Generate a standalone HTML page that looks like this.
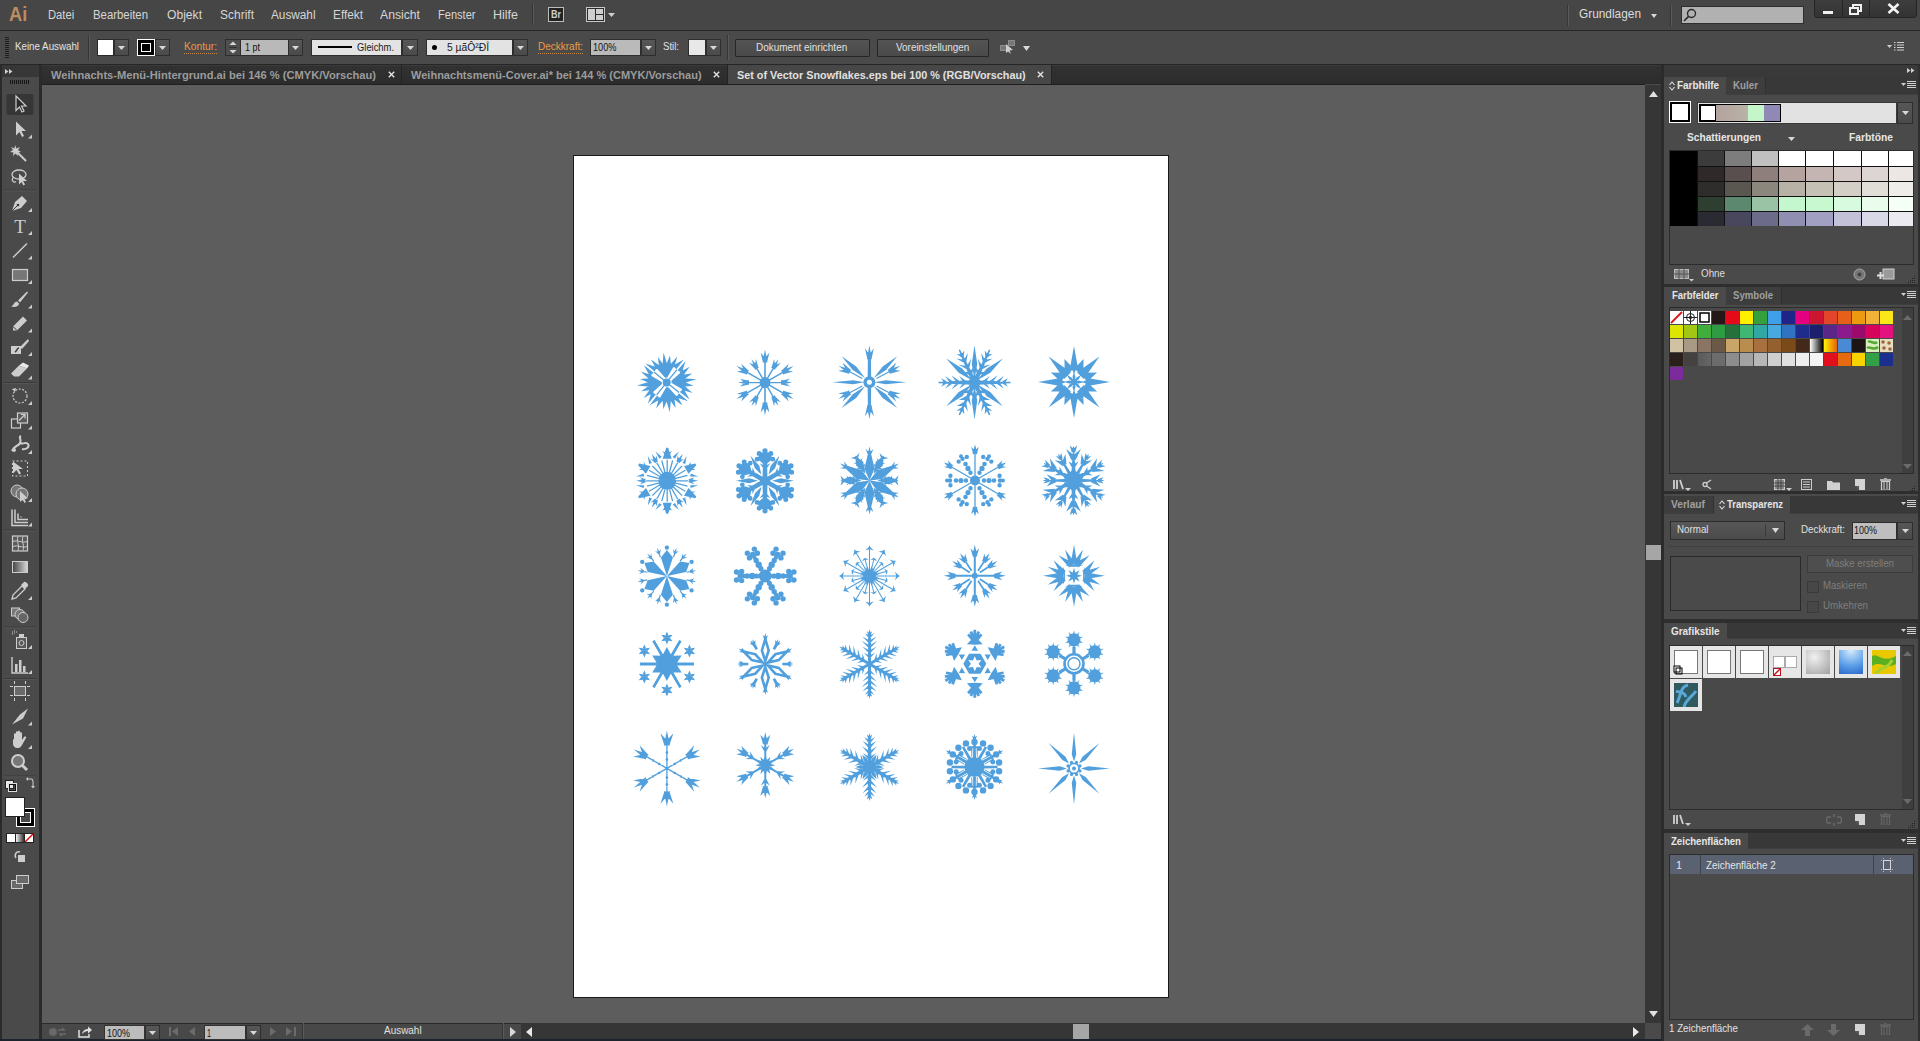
<!DOCTYPE html>
<html><head><meta charset="utf-8">
<style>
*{margin:0;padding:0;box-sizing:border-box}
html,body{width:1920px;height:1041px;overflow:hidden;background:#4a4a4a;font-family:"Liberation Sans",sans-serif;position:relative}
.a{position:absolute}
.t{position:absolute;white-space:pre;transform-origin:0 0}
</style></head><body>
<div class="a" style="left:0px;top:0px;width:1920px;height:30px;background:#464646;"></div>
<div class="a" style="left:0px;top:30px;width:1920px;height:1px;background:#272727;"></div>
<div class="t" style="left:8.5px;top:3.22px;font-size:21px;line-height:21px;font-weight:700;color:#bd8c63;transform:scaleX(0.8667);">Ai</div>
<div class="t" style="left:47.5px;top:8.84px;font-size:12px;line-height:12px;font-weight:400;color:#d6d6d6;transform:scaleX(0.9352);">Datei</div>
<div class="t" style="left:92.5px;top:8.84px;font-size:12px;line-height:12px;font-weight:400;color:#d6d6d6;transform:scaleX(0.9475);">Bearbeiten</div>
<div class="t" style="left:167.0px;top:8.84px;font-size:12px;line-height:12px;font-weight:400;color:#d6d6d6;transform:scaleX(1.0090);">Objekt</div>
<div class="t" style="left:220.0px;top:8.84px;font-size:12px;line-height:12px;font-weight:400;color:#d6d6d6;transform:scaleX(0.9995);">Schrift</div>
<div class="t" style="left:271.0px;top:8.84px;font-size:12px;line-height:12px;font-weight:400;color:#d6d6d6;transform:scaleX(0.9811);">Auswahl</div>
<div class="t" style="left:333.0px;top:8.84px;font-size:12px;line-height:12px;font-weight:400;color:#d6d6d6;transform:scaleX(0.9846);">Effekt</div>
<div class="t" style="left:380.0px;top:8.84px;font-size:12px;line-height:12px;font-weight:400;color:#d6d6d6;transform:scaleX(1.0163);">Ansicht</div>
<div class="t" style="left:437.5px;top:8.84px;font-size:12px;line-height:12px;font-weight:400;color:#d6d6d6;transform:scaleX(0.9217);">Fenster</div>
<div class="t" style="left:493.0px;top:8.84px;font-size:12px;line-height:12px;font-weight:400;color:#d6d6d6;transform:scaleX(1.0410);">Hilfe</div>
<div class="a" style="left:532px;top:4px;width:1px;height:21px;background:#363636;"></div>
<div class="a" style="left:533px;top:4px;width:1px;height:21px;background:#5a5a5a;"></div>
<div class="a" style="left:548px;top:7px;width:16px;height:15px;background:#232323;border:1px solid #bdbdbd;"></div>
<div class="t" style="left:551.0px;top:10.04px;font-size:10px;line-height:10px;font-weight:700;color:#d0d0d0;transform:scaleX(0.8989);">Br</div>
<svg class="a" style="left:586px;top:7px;" width="30" height="15" viewBox="0 0 30 15"><rect x="0.5" y="0.5" width="18" height="14" fill="#2a2a2a" stroke="#c8c8c8"/><rect x="2" y="2" width="7" height="11" fill="#cfcfcf"/><rect x="10" y="2" width="7" height="5" fill="#cfcfcf"/><rect x="10" y="8" width="7" height="5" fill="#cfcfcf"/><path d="M22 6H29L25.5 10Z" fill="#d0d0d0"/></svg>
<div class="a" style="left:1567px;top:5px;width:1px;height:21px;background:#363636;"></div>
<div class="a" style="left:1568px;top:5px;width:1px;height:21px;background:#5a5a5a;"></div>
<div class="t" style="left:1579.0px;top:7.84px;font-size:12px;line-height:12px;font-weight:400;color:#dcdcdc;transform:scaleX(0.9885);">Grundlagen</div>
<svg class="a" style="left:1650.5px;top:13.5px;" width="6" height="4" viewBox="0 0 6 4"><path d="M0 0H6L3.0 4Z" fill="#d8d8d8"/></svg>
<div class="a" style="left:1670px;top:5px;width:1px;height:21px;background:#363636;"></div>
<div class="a" style="left:1671px;top:5px;width:1px;height:21px;background:#5a5a5a;"></div>
<div class="a" style="left:1681px;top:6px;width:123px;height:18px;background:#b1b1b1;border:1px solid #2f2f2f;"></div>
<svg class="a" style="left:1683px;top:8px;" width="14" height="14" viewBox="0 0 14 14"><circle cx="8.5" cy="5.5" r="4" fill="none" stroke="#2a2a2a" stroke-width="1.4"/><path d="M5.6 8.4L1 13" stroke="#2a2a2a" stroke-width="1.6"/></svg>
<div class="a" style="left:1814px;top:-1px;width:103px;height:19px;background:linear-gradient(#3d3d3d,#333);border:1px solid #252525;border-radius:0 0 3px 3px;"></div>
<div class="a" style="left:1842px;top:0px;width:1px;height:18px;background:#262626;"></div>
<div class="a" style="left:1869px;top:0px;width:1px;height:18px;background:#262626;"></div>
<div class="a" style="left:1823px;top:11px;width:10px;height:3px;background:#f0f0f0;"></div>
<svg class="a" style="left:1849px;top:4px;" width="13" height="11" viewBox="0 0 13 11"><rect x="4" y="1" width="8" height="6" fill="none" stroke="#f0f0f0" stroke-width="2"/><rect x="1" y="4" width="8" height="6" fill="#383838" stroke="#f0f0f0" stroke-width="2"/></svg>
<svg class="a" style="left:1887px;top:3px;" width="13" height="11" viewBox="0 0 13 11"><path d="M1.5 1L11.5 10M11.5 1L1.5 10" stroke="#f4f4f4" stroke-width="2.6"/></svg>
<div class="a" style="left:0px;top:31px;width:1920px;height:33px;background:#4a4a4a;"></div>
<div class="a" style="left:0px;top:64px;width:1920px;height:1px;background:#262626;"></div>
<svg class="a" style="left:5px;top:37px;" width="4" height="21" viewBox="0 0 4 21"><rect x="0" y="0" width="4" height="1" fill="#1e1e1e"/><rect x="0" y="2" width="4" height="1" fill="#1e1e1e"/><rect x="0" y="4" width="4" height="1" fill="#1e1e1e"/><rect x="0" y="6" width="4" height="1" fill="#1e1e1e"/><rect x="0" y="8" width="4" height="1" fill="#1e1e1e"/><rect x="0" y="10" width="4" height="1" fill="#1e1e1e"/><rect x="0" y="12" width="4" height="1" fill="#1e1e1e"/><rect x="0" y="14" width="4" height="1" fill="#1e1e1e"/><rect x="0" y="16" width="4" height="1" fill="#1e1e1e"/><rect x="0" y="18" width="4" height="1" fill="#1e1e1e"/><rect x="0" y="20" width="4" height="1" fill="#1e1e1e"/></svg>
<div class="t" style="left:15.0px;top:40.69px;font-size:11px;line-height:11px;font-weight:400;color:#e2e2e2;transform:scaleX(0.8868);">Keine Auswahl</div>
<div class="a" style="left:88px;top:35px;width:1px;height:25px;background:#363636;"></div>
<div class="a" style="left:89px;top:35px;width:1px;height:25px;background:#5a5a5a;"></div>
<div class="a" style="left:97px;top:39px;width:17px;height:17px;background:#ffffff;border:1px solid #2a2a2a;"></div>
<div class="a" style="left:114px;top:39px;width:15px;height:17px;background:linear-gradient(#575757,#4a4a4a);border:1px solid #2e2e2e;"></div>
<svg class="a" style="left:118.0px;top:45.5px;" width="7" height="4" viewBox="0 0 7 4"><path d="M0 0H7L3.5 4Z" fill="#d8d8d8"/></svg>
<div class="a" style="left:137px;top:39px;width:18px;height:17px;background:#000;border:1px solid #fff;"></div>
<div class="a" style="left:141px;top:43px;width:10px;height:9px;background:transparent;border:1.5px solid #fff;"></div>
<div class="a" style="left:155px;top:39px;width:15px;height:17px;background:linear-gradient(#575757,#4a4a4a);border:1px solid #2e2e2e;"></div>
<svg class="a" style="left:159.0px;top:45.5px;" width="7" height="4" viewBox="0 0 7 4"><path d="M0 0H7L3.5 4Z" fill="#d8d8d8"/></svg>
<div class="t" style="left:184.0px;top:40.69px;font-size:11px;line-height:11px;font-weight:400;color:#e89a48;transform:scaleX(0.9304);">Kontur:</div>
<div class="a" style="left:184px;top:53px;width:33px;height:1px;background:repeating-linear-gradient(90deg,#c9863e 0 1px,transparent 1px 2px);"></div>
<div class="a" style="left:225px;top:39px;width:16px;height:17px;background:#4e4e4e;border:1px solid #2e2e2e;"></div>
<svg class="a" style="left:229px;top:40px;" width="8" height="15" viewBox="0 0 8 15"><path d="M0.5 5L4 1.5L7.5 5Z" fill="#d8d8d8"/><path d="M0.5 10L4 13.5L7.5 10Z" fill="#d8d8d8"/><path d="M0 7.5H8" stroke="#333"/></svg>
<div class="a" style="left:241px;top:39px;width:48px;height:17px;background:#b9b9b9;border-top:1px solid #2e2e2e;border-bottom:1px solid #2e2e2e;"></div>
<div class="t" style="left:245.0px;top:41.69px;font-size:11px;line-height:11px;font-weight:400;color:#151515;transform:scaleX(0.8170);">1 pt</div>
<div class="a" style="left:288px;top:39px;width:15px;height:17px;background:linear-gradient(#575757,#4a4a4a);border:1px solid #2e2e2e;"></div>
<svg class="a" style="left:292.0px;top:45.5px;" width="7" height="4" viewBox="0 0 7 4"><path d="M0 0H7L3.5 4Z" fill="#d8d8d8"/></svg>
<div class="a" style="left:311px;top:39px;width:91px;height:17px;background:#e3e3e3;border:1px solid #2e2e2e;"></div>
<div class="a" style="left:318px;top:46px;width:34px;height:2px;background:#000;"></div>
<div class="t" style="left:357.0px;top:41.69px;font-size:11px;line-height:11px;font-weight:400;color:#1a1a1a;transform:scaleX(0.8524);">Gleichm.</div>
<div class="a" style="left:402px;top:39px;width:16px;height:17px;background:linear-gradient(#575757,#4a4a4a);border:1px solid #2e2e2e;"></div>
<svg class="a" style="left:406.5px;top:45.5px;" width="7" height="4" viewBox="0 0 7 4"><path d="M0 0H7L3.5 4Z" fill="#d8d8d8"/></svg>
<div class="a" style="left:426px;top:39px;width:87px;height:17px;background:#e3e3e3;border:1px solid #2e2e2e;"></div>
<div class="a" style="left:432px;top:45px;width:5px;height:5px;background:#000;border-radius:50%;"></div>
<div class="t" style="left:447.0px;top:41.69px;font-size:11px;line-height:11px;font-weight:400;color:#1a1a1a;transform:scaleX(0.9363);">5 µãÔ²ÐÎ</div>
<div class="a" style="left:513px;top:39px;width:15px;height:17px;background:linear-gradient(#575757,#4a4a4a);border:1px solid #2e2e2e;"></div>
<svg class="a" style="left:517.0px;top:45.5px;" width="7" height="4" viewBox="0 0 7 4"><path d="M0 0H7L3.5 4Z" fill="#d8d8d8"/></svg>
<div class="t" style="left:537.5px;top:40.69px;font-size:11px;line-height:11px;font-weight:400;color:#e89a48;transform:scaleX(0.9088);">Deckkraft:</div>
<div class="a" style="left:538px;top:53px;width:45px;height:1px;background:repeating-linear-gradient(90deg,#c9863e 0 1px,transparent 1px 2px);"></div>
<div class="a" style="left:590px;top:39px;width:51px;height:17px;background:#bababa;border:1px solid #2e2e2e;"></div>
<div class="t" style="left:592.5px;top:41.69px;font-size:11px;line-height:11px;font-weight:400;color:#151515;transform:scaleX(0.8351);">100%</div>
<div class="a" style="left:641px;top:39px;width:15px;height:17px;background:linear-gradient(#575757,#4a4a4a);border:1px solid #2e2e2e;"></div>
<svg class="a" style="left:645.0px;top:45.5px;" width="7" height="4" viewBox="0 0 7 4"><path d="M0 0H7L3.5 4Z" fill="#d8d8d8"/></svg>
<div class="t" style="left:663.0px;top:40.69px;font-size:11px;line-height:11px;font-weight:400;color:#e2e2e2;transform:scaleX(0.8722);">Stil:</div>
<div class="a" style="left:688px;top:39px;width:18px;height:17px;background:#e8e8e8;border:1px solid #2e2e2e;"></div>
<div class="a" style="left:706px;top:39px;width:15px;height:17px;background:linear-gradient(#575757,#4a4a4a);border:1px solid #2e2e2e;"></div>
<svg class="a" style="left:710.0px;top:45.5px;" width="7" height="4" viewBox="0 0 7 4"><path d="M0 0H7L3.5 4Z" fill="#d8d8d8"/></svg>
<div class="a" style="left:727px;top:35px;width:1px;height:25px;background:#363636;"></div>
<div class="a" style="left:728px;top:35px;width:1px;height:25px;background:#5a5a5a;"></div>
<div class="a" style="left:735px;top:39px;width:135px;height:18px;background:linear-gradient(#545454,#4a4a4a);border:1px solid #262626;border-radius:1px;"></div>
<div class="t" style="left:756.3px;top:41.69px;font-size:11px;line-height:11px;font-weight:400;color:#e0e0e0;transform:scaleX(0.9039);">Dokument einrichten</div>
<div class="a" style="left:877px;top:39px;width:112px;height:18px;background:linear-gradient(#545454,#4a4a4a);border:1px solid #262626;border-radius:1px;"></div>
<div class="t" style="left:895.8px;top:41.69px;font-size:11px;line-height:11px;font-weight:400;color:#e0e0e0;transform:scaleX(0.9023);">Voreinstellungen</div>
<svg class="a" style="left:999px;top:39px;" width="18" height="17" viewBox="0 0 18 17"><rect x="1.5" y="6.5" width="6" height="5" fill="#777" stroke="#bbb" stroke-dasharray="1 1"/><rect x="9.5" y="1.5" width="6" height="5" fill="#777" stroke="#bbb" stroke-dasharray="1 1"/><path d="M7 5L14 11L10.5 11.5L12 15L9 12.5L7 14Z" fill="#cfcfcf"/></svg>
<svg class="a" style="left:1022.5px;top:45.5px;" width="7" height="5" viewBox="0 0 7 5"><path d="M0 0H7L3.5 5Z" fill="#d8d8d8"/></svg>
<svg class="a" style="left:1887px;top:42px;" width="18" height="10" viewBox="0 0 18 10"><path d="M0 3H5L2.5 6Z" fill="#cfcfcf"/><path d="M7 0.5H8.5M7 3H8.5M7 5.5H8.5M7 8H8.5M10 0.5H17M10 3H17M10 5.5H17M10 8H17" stroke="#cfcfcf"/></svg>
<div class="a" style="left:0px;top:65px;width:42px;height:976px;background:#2b2b2b;"></div>
<div class="a" style="left:2px;top:65px;width:37px;height:12px;background:#373737;"></div>
<svg class="a" style="left:5px;top:69px;" width="8" height="5" viewBox="0 0 8 5"><path d="M0 0L3.5 2.5L0 5ZM4 0L7.5 2.5L4 5Z" fill="#cfcfcf"/></svg>
<div class="a" style="left:2px;top:77px;width:37px;height:964px;background:#4a4a4a;"></div>
<svg class="a" style="left:10px;top:80px;" width="20" height="4" viewBox="0 0 20 4"><rect x="0" y="0" width="1" height="4" fill="#161616"/><rect x="2" y="0" width="1" height="4" fill="#161616"/><rect x="4" y="0" width="1" height="4" fill="#161616"/><rect x="6" y="0" width="1" height="4" fill="#161616"/><rect x="8" y="0" width="1" height="4" fill="#161616"/><rect x="10" y="0" width="1" height="4" fill="#161616"/><rect x="12" y="0" width="1" height="4" fill="#161616"/><rect x="14" y="0" width="1" height="4" fill="#161616"/><rect x="16" y="0" width="1" height="4" fill="#161616"/><rect x="18" y="0" width="1" height="4" fill="#161616"/></svg>
<div class="a" style="left:42px;top:65px;width:1619px;height:19px;background:linear-gradient(#323232,#2c2c2c);"></div>
<div class="a" style="left:42px;top:65px;width:1619px;height:1px;background:#3a3a3a;"></div>
<div class="a" style="left:42px;top:84px;width:1603px;height:1px;background:#1f1f1f;"></div>
<div class="t" style="left:51.0px;top:69.69px;font-size:11px;line-height:11px;font-weight:700;color:#9c9c9c;transform:scaleX(1.0122);">Weihnachts-Menü-Hintergrund.ai bei 146 % (CMYK/Vorschau)</div>
<svg class="a" style="left:387.5px;top:71px;" width="7" height="7" viewBox="0 0 7 7"><path d="M0.8 0.8L6.2 6.2M6.2 0.8L0.8 6.2" stroke="#e8e8e8" stroke-width="1.3"/></svg>
<div class="a" style="left:401px;top:65px;width:1px;height:19px;background:#232323;"></div>
<div class="t" style="left:411.0px;top:69.69px;font-size:11px;line-height:11px;font-weight:700;color:#9c9c9c;transform:scaleX(1.0022);">Weihnachtsmenü-Cover.ai* bei 144 % (CMYK/Vorschau)</div>
<svg class="a" style="left:713.0px;top:71px;" width="7" height="7" viewBox="0 0 7 7"><path d="M0.8 0.8L6.2 6.2M6.2 0.8L0.8 6.2" stroke="#e8e8e8" stroke-width="1.3"/></svg>
<div class="a" style="left:727px;top:65px;width:1px;height:19px;background:#232323;"></div>
<div class="a" style="left:728px;top:65px;width:323px;height:19px;background:#474747;"></div>
<div class="t" style="left:737.0px;top:69.69px;font-size:11px;line-height:11px;font-weight:700;color:#e0e0e0;transform:scaleX(0.9846);">Set of Vector Snowflakes.eps bei 100 % (RGB/Vorschau)</div>
<svg class="a" style="left:1037.0px;top:71px;" width="7" height="7" viewBox="0 0 7 7"><path d="M0.8 0.8L6.2 6.2M6.2 0.8L0.8 6.2" stroke="#e8e8e8" stroke-width="1.3"/></svg>
<div class="a" style="left:1051px;top:65px;width:1px;height:19px;background:#232323;"></div>
<div class="a" style="left:42px;top:85px;width:1603px;height:938px;background:#5d5d5d;"></div>
<div class="a" style="left:573px;top:155px;width:596px;height:843px;background:#ffffff;border:1px solid #1a1a1a;"></div>
<svg class="a" style="left:0;top:0" width="1920" height="1041" viewBox="0 0 1920 1041"><g fill="#51a0dd"><path transform="translate(666.7 382.4)" d="M-1.55 -4.76L0.52 -4.97L7.73 -17.36L4.6 -18.44L1.33 -18.95L-1.99 -18.9L-5.24 -18.26L-8.33 -17.08L-11.17 -15.37ZM-9.72 -15.21L-21.42 -18.84L-12.14 -10.84ZM-6.61 -16.36L-15.72 -23.02L-10.39 -13.08ZM-2.92 -17.06L-8.84 -25.5L-7.59 -15.27ZM0.71 -17.17L-3.14 -29.84L-4.26 -16.65ZM4.25 -16.52L3.34 -26.78L-0.69 -17.3ZM7.44 -14.96L10.59 -25.79L3.07 -17.38ZM9.62 -13.12L17.04 -22.88L6.34 -16.9ZM4.76 -1.55L4.97 0.52L17.36 7.73L18.44 4.6L18.95 1.33L18.9 -1.99L18.26 -5.24L17.08 -8.33L15.37 -11.17ZM15.21 -9.72L18.84 -21.42L10.84 -12.14ZM16.36 -6.61L23.02 -15.72L13.08 -10.39ZM17.06 -2.92L25.5 -8.84L15.27 -7.59ZM17.17 0.71L29.84 -3.14L16.65 -4.26ZM16.52 4.25L26.78 3.34L17.3 -0.69ZM14.96 7.44L25.79 10.59L17.38 3.07ZM13.12 9.62L22.88 17.04L16.9 6.34ZM1.55 4.76L-0.52 4.97L-7.73 17.36L-4.6 18.44L-1.33 18.95L1.99 18.9L5.24 18.26L8.33 17.08L11.17 15.37ZM9.72 15.21L21.42 18.84L12.14 10.84ZM6.61 16.36L15.72 23.02L10.39 13.08ZM2.92 17.06L8.84 25.5L7.59 15.27ZM-0.71 17.17L3.14 29.84L4.26 16.65ZM-4.25 16.52L-3.34 26.78L0.69 17.3ZM-7.44 14.96L-10.59 25.79L-3.07 17.38ZM-9.62 13.12L-17.04 22.88L-6.34 16.9ZM-4.76 1.55L-4.97 -0.52L-17.36 -7.73L-18.44 -4.6L-18.95 -1.33L-18.9 1.99L-18.26 5.24L-17.08 8.33L-15.37 11.17ZM-15.21 9.72L-18.84 21.42L-10.84 12.14ZM-16.36 6.61L-23.02 15.72L-13.08 10.39ZM-17.06 2.92L-25.5 8.84L-15.27 7.59ZM-17.17 -0.71L-29.84 3.14L-16.65 4.26ZM-16.52 -4.25L-26.78 -3.34L-17.3 0.69ZM-14.96 -7.44L-25.79 -10.59L-17.38 -3.07ZM-13.12 -9.62L-22.88 -17.04L-16.9 -6.34ZM-0.51 -0.41L0.51 0.41L10.57 -12.03L9.56 -12.84ZM0.41 -0.51L-0.41 0.51L12.03 10.57L12.84 9.56ZM0.51 0.41L-0.51 -0.41L-10.57 12.03L-9.56 12.84ZM-0.41 0.51L0.41 -0.51L-12.03 -10.57L-12.84 -9.56ZM-4 0a4 4 0 1 0 8 0a4 4 0 1 0 -8 0Z"/><path transform="translate(765 382.6)" d="M-0.8 -4L0.8 -4L0.8 -24L-0.8 -24ZM2.5 -20L0 -33L-2.5 -20ZM2.02 -21.99L-4.38 -29.99L-2.02 -20.01ZM2.02 -20.01L4.38 -29.99L-2.02 -21.99ZM3.06 -2.69L3.86 -1.31L21.18 -11.31L20.38 -12.69ZM18.57 -7.83L28.58 -16.5L16.07 -12.17ZM20.05 -9.24L23.78 -18.79L16.32 -11.76ZM18.34 -8.26L28.16 -11.2L18.03 -12.74ZM3.86 1.31L3.06 2.69L20.38 12.69L21.18 11.31ZM16.07 12.17L28.58 16.5L18.57 7.83ZM18.03 12.74L28.16 11.2L18.34 8.26ZM16.32 11.76L23.78 18.79L20.05 9.24ZM0.8 4L-0.8 4L-0.8 24L0.8 24ZM-2.5 20L0 33L2.5 20ZM-2.02 21.99L4.38 29.99L2.02 20.01ZM-2.02 20.01L-4.38 29.99L2.02 21.99ZM-3.06 2.69L-3.86 1.31L-21.18 11.31L-20.38 12.69ZM-18.57 7.83L-28.58 16.5L-16.07 12.17ZM-20.05 9.24L-23.78 18.79L-16.32 11.76ZM-18.34 8.26L-28.16 11.2L-18.03 12.74ZM-3.86 -1.31L-3.06 -2.69L-20.38 -12.69L-21.18 -11.31ZM-16.07 -12.17L-28.58 -16.5L-18.57 -7.83ZM-18.03 -12.74L-28.16 -11.2L-18.34 -8.26ZM-16.32 -11.76L-23.78 -18.79L-20.05 -9.24ZM1.39 -3.81L2.61 -3.11L9.11 -14.37L7.89 -15.07ZM9.95 -12.73L13.5 -23.38L6.05 -14.98ZM10.5 -14.58L9.13 -23.7L6.5 -14.86ZM9.62 -13.06L15.96 -19.76L7.38 -16.38ZM4 -0.7L4 0.7L17 0.7L17 -0.7ZM16 2.25L27 -0L16 -2.25ZM17.88 1.8L25.09 -3.95L16.12 -1.8ZM16.12 1.8L25.09 3.95L17.88 -1.8ZM2.61 3.11L1.39 3.81L7.89 15.07L9.11 14.37ZM6.05 14.98L13.5 23.38L9.95 12.73ZM7.38 16.38L15.96 19.76L9.62 13.06ZM6.5 14.86L9.13 23.7L10.5 14.58ZM-1.39 3.81L-2.61 3.11L-9.11 14.37L-7.89 15.07ZM-9.95 12.73L-13.5 23.38L-6.05 14.98ZM-10.5 14.58L-9.13 23.7L-6.5 14.86ZM-9.62 13.06L-15.96 19.76L-7.38 16.38ZM-4 0.7L-4 -0.7L-17 -0.7L-17 0.7ZM-16 -2.25L-27 0L-16 2.25ZM-17.88 -1.8L-25.09 3.95L-16.12 1.8ZM-16.12 -1.8L-25.09 -3.95L-17.88 1.8ZM-2.61 -3.11L-1.39 -3.81L-7.89 -15.07L-9.11 -14.37ZM-6.05 -14.98L-13.5 -23.38L-9.95 -12.73ZM-7.38 -16.38L-15.96 -19.76L-9.62 -13.06ZM-6.5 -14.86L-9.13 -23.7L-10.5 -14.58ZM-5.5 0a5.5 5.5 0 1 0 11 0a5.5 5.5 0 1 0 -11 0Z"/><path transform="translate(869.4 382.2)" d="M-1.75 -5L1.75 -5L1.5 -26L-1.5 -26ZM2.5 -23L0 -37L-2.5 -23ZM2.06 -24.92L-4.47 -34.05L-2.06 -23.08ZM2.06 -23.08L4.47 -34.05L-2.06 -24.92ZM1.75 5L-1.75 5L-1.5 26L1.5 26ZM-2.5 23L0 37L2.5 23ZM-2.06 24.92L4.47 34.05L2.06 23.08ZM-2.06 23.08L-4.47 34.05L2.06 24.92ZM5 -0L16.2 2L37 -0L16.2 -2ZM-5 0L-16.2 -2L-37 0L-16.2 2ZM4.39 -4.09L16.62 -12.08L27.79 -25.92L13.21 -15.74ZM4.39 4.09L13.21 15.74L27.79 25.92L16.62 12.08ZM-4.39 4.09L-16.62 12.08L-27.79 25.92L-13.21 15.74ZM-4.39 -4.09L-13.21 -15.74L-27.79 -25.92L-16.62 -12.08ZM6.78 -4.29L7.35 -3.23L21.47 -10.74L20.91 -11.8ZM20.6 -8.12L30.9 -16.43L18.25 -12.54ZM22.1 -9.44L26.93 -19.58L18.51 -12.15ZM20.43 -8.55L31.29 -11.37L20.19 -13.04ZM7.35 3.23L6.78 4.29L20.91 11.8L21.47 10.74ZM18.25 12.54L30.9 16.43L20.6 8.12ZM20.19 13.04L31.29 11.37L20.43 8.55ZM18.51 12.15L26.93 19.58L22.1 9.44ZM-6.78 4.29L-7.35 3.23L-21.47 10.74L-20.91 11.8ZM-20.6 8.12L-30.9 16.43L-18.25 12.54ZM-22.1 9.44L-26.93 19.58L-18.51 12.15ZM-20.43 8.55L-31.29 11.37L-20.19 13.04ZM-7.35 -3.23L-6.78 -4.29L-20.91 -11.8L-21.47 -10.74ZM-18.25 -12.54L-30.9 -16.43L-20.6 -8.12ZM-20.19 -13.04L-31.29 -11.37L-20.43 -8.55ZM-18.51 -12.15L-26.93 -19.58L-22.1 -9.44ZM-6 0a6 6 0 1 0 12 0a6 6 0 1 0 -12 0Z"/><circle cx="869.4" cy="382.2" r="2.5" fill="#fff"/><path transform="translate(974.5 382.4)" d="M-0.77 -3.67L3.31 -1.77L15.89 -32.31L14.53 -32.94ZM5.31 -8.7L0.73 -16.61L2.3 -7.61ZM4.35 -6.65L12.26 -11.23L3.26 -9.66ZM8.27 -15.05L3.34 -23.9L5.26 -13.95ZM7.31 -13L16.16 -17.92L6.21 -16ZM11.22 -21.39L6.64 -29.3L8.22 -20.3ZM10.27 -19.34L18.18 -23.92L9.17 -22.35ZM13.76 -26.83L10.2 -31.92L10.75 -25.74ZM12.8 -24.78L17.89 -28.34L11.71 -27.79ZM3 -2.25L3 2.25L36 0.75L36 -0.75ZM10.13 1.13L15.36 -6.36L7.87 -1.13ZM7.87 1.13L15.36 6.36L10.13 -1.13ZM17.13 1.13L23.07 -7.07L14.87 -1.13ZM14.87 1.13L23.07 7.07L17.13 -1.13ZM24.13 1.13L29.36 -6.36L21.87 -1.13ZM21.87 1.13L29.36 6.36L24.13 -1.13ZM30.13 1.13L33.24 -4.24L27.87 -1.13ZM27.87 1.13L33.24 4.24L30.13 -1.13ZM3.31 1.77L-0.77 3.67L14.53 32.94L15.89 32.31ZM3.26 9.66L12.26 11.23L4.35 6.65ZM2.3 7.61L0.73 16.61L5.31 8.7ZM6.21 16L16.16 17.92L7.31 13ZM5.26 13.95L3.34 23.9L8.27 15.05ZM9.17 22.35L18.18 23.92L10.27 19.34ZM8.22 20.3L6.64 29.3L11.22 21.39ZM11.71 27.79L17.89 28.34L12.8 24.78ZM10.75 25.74L10.2 31.92L13.76 26.83ZM0.77 3.67L-3.31 1.77L-15.89 32.31L-14.53 32.94ZM-5.31 8.7L-0.73 16.61L-2.3 7.61ZM-4.35 6.65L-12.26 11.23L-3.26 9.66ZM-8.27 15.05L-3.34 23.9L-5.26 13.95ZM-7.31 13L-16.16 17.92L-6.21 16ZM-11.22 21.39L-6.64 29.3L-8.22 20.3ZM-10.27 19.34L-18.18 23.92L-9.17 22.35ZM-13.76 26.83L-10.2 31.92L-10.75 25.74ZM-12.8 24.78L-17.89 28.34L-11.71 27.79ZM-3 2.25L-3 -2.25L-36 -0.75L-36 0.75ZM-10.13 -1.13L-15.36 6.36L-7.87 1.13ZM-7.87 -1.13L-15.36 -6.36L-10.13 1.13ZM-17.13 -1.13L-23.07 7.07L-14.87 1.13ZM-14.87 -1.13L-23.07 -7.07L-17.13 1.13ZM-24.13 -1.13L-29.36 6.36L-21.87 1.13ZM-21.87 -1.13L-29.36 -6.36L-24.13 1.13ZM-30.13 -1.13L-33.24 4.24L-27.87 1.13ZM-27.87 -1.13L-33.24 -4.24L-30.13 1.13ZM-3.31 -1.77L0.77 -3.67L-14.53 -32.94L-15.89 -32.31ZM-3.26 -9.66L-12.26 -11.23L-4.35 -6.65ZM-2.3 -7.61L-0.73 -16.61L-5.31 -8.7ZM-6.21 -16L-16.16 -17.92L-7.31 -13ZM-5.26 -13.95L-3.34 -23.9L-8.27 -15.05ZM-9.17 -22.35L-18.18 -23.92L-10.27 -19.34ZM-8.22 -20.3L-6.64 -29.3L-11.22 -21.39ZM-11.71 -27.79L-17.89 -28.34L-12.8 -24.78ZM-10.75 -25.74L-10.2 -31.92L-13.76 -26.83ZM0 -3L2.75 -18.3L0 -37L-2.75 -18.3ZM0 3L-2.75 18.3L0 37L2.75 18.3ZM2.3 -1.93L15.79 -9.66L28.34 -23.78L12.25 -13.87ZM2.3 1.93L12.25 13.87L28.34 23.78L15.79 9.66ZM-2.3 1.93L-15.79 9.66L-28.34 23.78L-12.25 13.87ZM-2.3 -1.93L-12.25 -13.87L-28.34 -23.78L-15.79 -9.66ZM-6 0a6 6 0 1 0 12 0a6 6 0 1 0 -12 0Z"/><path transform="translate(1074 382)" d="M0 -8L3.5 -16.4L0 -36L-3.5 -16.4ZM3.83 -9.24L9.36 -13.44L9.57 -23.1L2.89 -16.12ZM5.66 -5.66L14.07 -9.12L25.46 -25.46L9.12 -14.07ZM9.24 -3.83L16.12 -2.89L23.1 -9.57L13.44 -9.36ZM8 -0L16.4 3.5L36 -0L16.4 -3.5ZM9.24 3.83L13.44 9.36L23.1 9.57L16.12 2.89ZM5.66 5.66L9.12 14.07L25.46 25.46L14.07 9.12ZM3.83 9.24L2.89 16.12L9.57 23.1L9.36 13.44ZM0 8L-3.5 16.4L0 36L3.5 16.4ZM-3.83 9.24L-9.36 13.44L-9.57 23.1L-2.89 16.12ZM-5.66 5.66L-14.07 9.12L-25.46 25.46L-9.12 14.07ZM-9.24 3.83L-16.12 2.89L-23.1 9.57L-13.44 9.36ZM-8 0L-16.4 -3.5L-36 0L-16.4 3.5ZM-9.24 -3.83L-13.44 -9.36L-23.1 -9.57L-16.12 -2.89ZM-5.66 -5.66L-9.12 -14.07L-25.46 -25.46L-14.07 -9.12ZM-3.83 -9.24L-2.89 -16.12L-9.57 -23.1L-9.36 -13.44ZM0 -13L7.78 -7.78L9.5 -16.45L0 -17L-9.5 -16.45L-7.78 -7.78ZM13 -0L7.78 7.78L16.45 9.5L17 -0L16.45 -9.5L7.78 -7.78ZM0 13L-7.78 7.78L-9.5 16.45L0 17L9.5 16.45L7.78 7.78ZM-13 0L-7.78 -7.78L-16.45 -9.5L-17 0L-16.45 9.5L-7.78 7.78Z"/><path transform="translate(1074 382)" d="M0 0L1.5 -5L0 -10L-1.5 -5ZM0 0L4.6 -2.47L7.07 -7.07L2.47 -4.6ZM0 0L5 1.5L10 -0L5 -1.5ZM0 0L2.47 4.6L7.07 7.07L4.6 2.47ZM0 0L-1.5 5L0 10L1.5 5ZM0 0L-4.6 2.47L-7.07 7.07L-2.47 4.6ZM0 0L-5 -1.5L-10 0L-5 1.5ZM0 0L-2.47 -4.6L-7.07 -7.07L-4.6 -2.47ZM-3.5 0a3.5 3.5 0 1 0 7 0a3.5 3.5 0 1 0 -7 0ZM3.18 -9.55L9.55 -3.18L11.67 -5.3L5.3 -11.67ZM9.55 3.18L3.18 9.55L5.3 11.67L11.67 5.3ZM-3.18 9.55L-9.55 3.18L-11.67 5.3L-5.3 11.67ZM-9.55 -3.18L-3.18 -9.55L-5.3 -11.67L-11.67 -5.3Z"/><path transform="translate(667.2 480.8)" d="M-9 0a9 9 0 1 0 18 0a9 9 0 1 0 -18 0ZM-0.65 -7L0.65 -7L0.65 -21L-0.65 -21ZM1.18 -6.93L2.44 -6.59L6.06 -20.12L4.81 -20.45ZM2.94 -6.39L4.06 -5.74L11.06 -17.86L9.94 -18.51ZM4.49 -5.41L5.41 -4.49L15.31 -14.39L14.39 -15.31ZM5.74 -4.06L6.39 -2.94L18.51 -9.94L17.86 -11.06ZM6.59 -2.44L6.93 -1.18L20.45 -4.81L20.12 -6.06ZM7 -0.65L7 0.65L21 0.65L21 -0.65ZM6.93 1.18L6.59 2.44L20.12 6.06L20.45 4.81ZM6.39 2.94L5.74 4.06L17.86 11.06L18.51 9.94ZM5.41 4.49L4.49 5.41L14.39 15.31L15.31 14.39ZM4.06 5.74L2.94 6.39L9.94 18.51L11.06 17.86ZM2.44 6.59L1.18 6.93L4.81 20.45L6.06 20.12ZM0.65 7L-0.65 7L-0.65 21L0.65 21ZM-1.18 6.93L-2.44 6.59L-6.06 20.12L-4.81 20.45ZM-2.94 6.39L-4.06 5.74L-11.06 17.86L-9.94 18.51ZM-4.49 5.41L-5.41 4.49L-15.31 14.39L-14.39 15.31ZM-5.74 4.06L-6.39 2.94L-18.51 9.94L-17.86 11.06ZM-6.59 2.44L-6.93 1.18L-20.45 4.81L-20.12 6.06ZM-7 0.65L-7 -0.65L-21 -0.65L-21 0.65ZM-6.93 -1.18L-6.59 -2.44L-20.12 -6.06L-20.45 -4.81ZM-6.39 -2.94L-5.74 -4.06L-17.86 -11.06L-18.51 -9.94ZM-5.41 -4.49L-4.49 -5.41L-14.39 -15.31L-15.31 -14.39ZM-4.06 -5.74L-2.94 -6.39L-9.94 -18.51L-11.06 -17.86ZM-2.44 -6.59L-1.18 -6.93L-4.81 -20.45L-6.06 -20.12ZM-4.5 -22L4.5 -22L1 -33L-1 -33ZM1.06 -26.06L-4.95 -29.95L-1.06 -23.94ZM1.06 -23.94L4.95 -29.95L-1.06 -26.06ZM12.73 -18.05L15.5 -26.85L9.27 -20.05ZM12.59 -19.19L10.45 -25.33L9.41 -18.91ZM11.68 -17.6L16.71 -21.72L10.32 -20.5ZM7.76 -22.11L11.76 -29.2L5.47 -24.03ZM-5.47 -24.03L-11.76 -29.2L-7.76 -22.11ZM16.8 -14.9L21.3 -7.1L29.08 -15.63L28.08 -17.37ZM23.1 -12.11L23.46 -19.26L20.2 -12.89ZM21.26 -11.05L28.41 -10.69L22.04 -13.95ZM22 2L31 -0L22 -2ZM22.92 1.31L27.16 -3.61L21.08 -1.31ZM21.08 1.31L27.16 3.61L22.92 -1.31ZM23.03 -4.33L31.17 -4.42L23.55 -7.28ZM18.08 -16.75L19.41 -24.78L15.26 -17.78ZM21.3 7.1L16.8 14.9L28.08 17.37L29.08 15.63ZM22.04 13.95L28.41 10.69L21.26 11.05ZM20.2 12.89L23.46 19.26L23.1 12.11ZM9.27 20.05L15.5 26.85L12.73 18.05ZM10.32 20.5L16.71 21.72L11.68 17.6ZM9.41 18.91L10.45 25.33L12.59 19.19ZM15.26 17.78L19.41 24.78L18.08 16.75ZM23.55 7.28L31.17 4.42L23.03 4.33ZM4.5 22L-4.5 22L-1 33L1 33ZM-1.06 26.06L4.95 29.95L1.06 23.94ZM-1.06 23.94L-4.95 29.95L1.06 26.06ZM-12.73 18.05L-15.5 26.85L-9.27 20.05ZM-12.59 19.19L-10.45 25.33L-9.41 18.91ZM-11.68 17.6L-16.71 21.72L-10.32 20.5ZM-7.76 22.11L-11.76 29.2L-5.47 24.03ZM5.47 24.03L11.76 29.2L7.76 22.11ZM-16.8 14.9L-21.3 7.1L-29.08 15.63L-28.08 17.37ZM-23.1 12.11L-23.46 19.26L-20.2 12.89ZM-21.26 11.05L-28.41 10.69L-22.04 13.95ZM-22 -2L-31 0L-22 2ZM-22.92 -1.31L-27.16 3.61L-21.08 1.31ZM-21.08 -1.31L-27.16 -3.61L-22.92 1.31ZM-23.03 4.33L-31.17 4.42L-23.55 7.28ZM-18.08 16.75L-19.41 24.78L-15.26 17.78ZM-21.3 -7.1L-16.8 -14.9L-28.08 -17.37L-29.08 -15.63ZM-22.04 -13.95L-28.41 -10.69L-21.26 -11.05ZM-20.2 -12.89L-23.46 -19.26L-23.1 -12.11ZM-9.27 -20.05L-15.5 -26.85L-12.73 -18.05ZM-10.32 -20.5L-16.71 -21.72L-11.68 -17.6ZM-9.41 -18.91L-10.45 -25.33L-12.59 -19.19ZM-15.26 -17.78L-19.41 -24.78L-18.08 -16.75ZM-23.55 -7.28L-31.17 -4.42L-23.03 -4.33Z"/><path transform="translate(765 480.8)" d="M-2.5 0L2.5 0L2 -22L-2 -22ZM1.78 -16.91L6.43 -21.04L6.53 -26.2L0 -30L-6.53 -26.2L-6.43 -21.04L-1.78 -16.91ZM-2.6 -30a2.6 2.6 0 1 0 5.2 0a2.6 2.6 0 1 0 -5.2 0ZM-8.32 -27.39a2.5 2.5 0 1 0 5 0a2.5 2.5 0 1 0 -5 0ZM3.32 -27.39a2.5 2.5 0 1 0 5 0a2.5 2.5 0 1 0 -5 0ZM-10.27 -21.61a2.4 2.4 0 1 0 4.8 0a2.4 2.4 0 1 0 -4.8 0ZM5.47 -21.61a2.4 2.4 0 1 0 4.8 0a2.4 2.4 0 1 0 -4.8 0ZM1.12 -14.34L-5.36 -17.5L-1.12 -11.66ZM1.12 -11.66L5.36 -17.5L-1.12 -14.34ZM3.5 -6.06L10.07 -12.43L14.5 -25.11L5.73 -14.93ZM-1.25 -2.17L1.25 2.17L20.05 -9.27L18.05 -12.73ZM15.53 -6.91L21.44 -4.95L25.95 -7.44L25.98 -15L19.42 -18.76L15 -16.09L13.75 -9.99ZM23.38 -15a2.6 2.6 0 1 0 5.2 0a2.6 2.6 0 1 0 -5.2 0ZM18.31 -18.74a2.5 2.5 0 1 0 5 0a2.5 2.5 0 1 0 -5 0ZM24.13 -8.65a2.5 2.5 0 1 0 5 0a2.5 2.5 0 1 0 -5 0ZM12.38 -17.62a2.4 2.4 0 1 0 4.8 0a2.4 2.4 0 1 0 -4.8 0ZM20.25 -3.99a2.4 2.4 0 1 0 4.8 0a2.4 2.4 0 1 0 -4.8 0ZM12.98 -6.2L12.47 -13.39L9.53 -6.8ZM10.66 -4.86L17.84 -4.11L11.86 -8.14ZM7 -0L15.8 2.5L29 -0L15.8 -2.5ZM1.25 -2.17L-1.25 2.17L18.05 12.73L20.05 9.27ZM13.75 9.99L15 16.09L19.42 18.76L25.98 15L25.95 7.44L21.44 4.95L15.53 6.91ZM23.38 15a2.6 2.6 0 1 0 5.2 0a2.6 2.6 0 1 0 -5.2 0ZM24.13 8.65a2.5 2.5 0 1 0 5 0a2.5 2.5 0 1 0 -5 0ZM18.31 18.74a2.5 2.5 0 1 0 5 0a2.5 2.5 0 1 0 -5 0ZM20.25 3.99a2.4 2.4 0 1 0 4.8 0a2.4 2.4 0 1 0 -4.8 0ZM12.38 17.62a2.4 2.4 0 1 0 4.8 0a2.4 2.4 0 1 0 -4.8 0ZM11.86 8.14L17.84 4.11L10.66 4.86ZM9.53 6.8L12.47 13.39L12.98 6.2ZM3.5 6.06L5.73 14.93L14.5 25.11L10.07 12.43ZM2.5 -0L-2.5 0L-2 22L2 22ZM-1.78 16.91L-6.43 21.04L-6.53 26.2L0 30L6.53 26.2L6.43 21.04L1.78 16.91ZM-2.6 30a2.6 2.6 0 1 0 5.2 0a2.6 2.6 0 1 0 -5.2 0ZM3.32 27.39a2.5 2.5 0 1 0 5 0a2.5 2.5 0 1 0 -5 0ZM-8.32 27.39a2.5 2.5 0 1 0 5 0a2.5 2.5 0 1 0 -5 0ZM5.47 21.61a2.4 2.4 0 1 0 4.8 0a2.4 2.4 0 1 0 -4.8 0ZM-10.27 21.61a2.4 2.4 0 1 0 4.8 0a2.4 2.4 0 1 0 -4.8 0ZM-1.12 14.34L5.36 17.5L1.12 11.66ZM-1.12 11.66L-5.36 17.5L1.12 14.34ZM-3.5 6.06L-10.07 12.43L-14.5 25.11L-5.73 14.93ZM1.25 2.17L-1.25 -2.17L-20.05 9.27L-18.05 12.73ZM-15.53 6.91L-21.44 4.95L-25.95 7.44L-25.98 15L-19.42 18.76L-15 16.09L-13.75 9.99ZM-28.58 15a2.6 2.6 0 1 0 5.2 0a2.6 2.6 0 1 0 -5.2 0ZM-23.31 18.74a2.5 2.5 0 1 0 5 0a2.5 2.5 0 1 0 -5 0ZM-29.13 8.65a2.5 2.5 0 1 0 5 0a2.5 2.5 0 1 0 -5 0ZM-17.18 17.62a2.4 2.4 0 1 0 4.8 0a2.4 2.4 0 1 0 -4.8 0ZM-25.05 3.99a2.4 2.4 0 1 0 4.8 0a2.4 2.4 0 1 0 -4.8 0ZM-12.98 6.2L-12.47 13.39L-9.53 6.8ZM-10.66 4.86L-17.84 4.11L-11.86 8.14ZM-7 0L-15.8 -2.5L-29 0L-15.8 2.5ZM-1.25 2.17L1.25 -2.17L-18.05 -12.73L-20.05 -9.27ZM-13.75 -9.99L-15 -16.09L-19.42 -18.76L-25.98 -15L-25.95 -7.44L-21.44 -4.95L-15.53 -6.91ZM-28.58 -15a2.6 2.6 0 1 0 5.2 0a2.6 2.6 0 1 0 -5.2 0ZM-29.13 -8.65a2.5 2.5 0 1 0 5 0a2.5 2.5 0 1 0 -5 0ZM-23.31 -18.74a2.5 2.5 0 1 0 5 0a2.5 2.5 0 1 0 -5 0ZM-25.05 -3.99a2.4 2.4 0 1 0 4.8 0a2.4 2.4 0 1 0 -4.8 0ZM-17.18 -17.62a2.4 2.4 0 1 0 4.8 0a2.4 2.4 0 1 0 -4.8 0ZM-11.86 -8.14L-17.84 -4.11L-10.66 -4.86ZM-9.53 -6.8L-12.47 -13.39L-12.98 -6.2ZM-3.5 -6.06L-5.73 -14.93L-14.5 -25.11L-10.07 -12.43ZM-2.5 -4.33L-8.66 -5L-5 0L-8.66 5L-2.5 4.33L0 10L2.5 4.33L8.66 5L5 -0L8.66 -5L2.5 -4.33L0 -10Z"/><path transform="translate(869.5 480.6)" d="M0 0L5 -11.9L0 -34L-5 -11.9ZM4 -6.93L13.24 -14.93L14.5 -25.11L6.31 -18.93ZM8.3 -12.87L4 -17.32L5.7 -11.37ZM7 -10.62L13 -12.12L7 -13.62ZM11.3 -18.07L7 -22.52L8.7 -16.57ZM10 -15.82L16 -17.32L10 -18.82ZM14.3 -23.27L10 -27.71L11.7 -21.77ZM13 -21.02L19 -22.52L13 -24.02ZM1.23 -26.86L-4.02 -31.73L-1.23 -25.14ZM1.23 -25.14L4.02 -31.73L-1.23 -26.86ZM0 0L12.81 -1.62L29.44 -17L7.81 -10.28ZM8 -0L19.55 4L29 -0L19.55 -4ZM15.3 0.75L17 -5.2L12.7 -0.75ZM12.7 0.75L17 5.2L15.3 -0.75ZM21.3 0.75L23 -5.2L18.7 -0.75ZM18.7 0.75L23 5.2L21.3 -0.75ZM27.3 0.75L29 -5.2L24.7 -0.75ZM24.7 0.75L29 5.2L27.3 -0.75ZM23.88 -12.37L25.47 -19.34L21.16 -13.63ZM22.39 -11.51L29.49 -12.39L22.65 -14.49ZM0 0L7.81 10.28L29.44 17L12.81 1.62ZM4 6.93L6.31 18.93L14.5 25.11L13.24 14.93ZM7 13.62L13 12.12L7 10.62ZM5.7 11.37L4 17.32L8.3 12.87ZM10 18.82L16 17.32L10 15.82ZM8.7 16.57L7 22.52L11.3 18.07ZM13 24.02L19 22.52L13 21.02ZM11.7 21.77L10 27.71L14.3 23.27ZM22.65 14.49L29.49 12.39L22.39 11.51ZM21.16 13.63L25.47 19.34L23.88 12.37ZM0 0L-5 11.9L0 34L5 11.9ZM-4 6.93L-13.24 14.93L-14.5 25.11L-6.31 18.93ZM-8.3 12.87L-4 17.32L-5.7 11.37ZM-7 10.62L-13 12.12L-7 13.62ZM-11.3 18.07L-7 22.52L-8.7 16.57ZM-10 15.82L-16 17.32L-10 18.82ZM-14.3 23.27L-10 27.71L-11.7 21.77ZM-13 21.02L-19 22.52L-13 24.02ZM-1.23 26.86L4.02 31.73L1.23 25.14ZM-1.23 25.14L-4.02 31.73L1.23 26.86ZM0 0L-12.81 1.62L-29.44 17L-7.81 10.28ZM-8 0L-19.55 -4L-29 0L-19.55 4ZM-15.3 -0.75L-17 5.2L-12.7 0.75ZM-12.7 -0.75L-17 -5.2L-15.3 0.75ZM-21.3 -0.75L-23 5.2L-18.7 0.75ZM-18.7 -0.75L-23 -5.2L-21.3 0.75ZM-27.3 -0.75L-29 5.2L-24.7 0.75ZM-24.7 -0.75L-29 -5.2L-27.3 0.75ZM-23.88 12.37L-25.47 19.34L-21.16 13.63ZM-22.39 11.51L-29.49 12.39L-22.65 14.49ZM0 0L-7.81 -10.28L-29.44 -17L-12.81 -1.62ZM-4 -6.93L-6.31 -18.93L-14.5 -25.11L-13.24 -14.93ZM-7 -13.62L-13 -12.12L-7 -10.62ZM-5.7 -11.37L-4 -17.32L-8.3 -12.87ZM-10 -18.82L-16 -17.32L-10 -15.82ZM-8.7 -16.57L-7 -22.52L-11.3 -18.07ZM-13 -24.02L-19 -22.52L-13 -21.02ZM-11.7 -21.77L-10 -27.71L-14.3 -23.27ZM-22.65 -14.49L-29.49 -12.39L-22.39 -11.51ZM-21.16 -13.63L-25.47 -19.34L-23.88 -12.37Z"/><path transform="translate(975 480.5)" d="M-5 0a5 5 0 1 0 10 0a5 5 0 1 0 -10 0ZM-0.65 -3L0.65 -3L0.65 -28L-0.65 -28ZM2.5 -27L0 -36L-2.5 -27ZM1.73 -28L-3.82 -33.63L-1.73 -26ZM1.73 -26L3.82 -33.63L-1.73 -28ZM2.3 -7.79a2.2 2.2 0 1 0 4.4 0a2.2 2.2 0 1 0 -4.4 0ZM4.4 -12.12a2.6 2.6 0 1 0 5.2 0a2.6 2.6 0 1 0 -5.2 0ZM7.2 -16.45a2.3 2.3 0 1 0 4.6 0a2.3 2.3 0 1 0 -4.6 0ZM6.02 -23.61a2.2 2.2 0 1 0 4.4 0a2.2 2.2 0 1 0 -4.4 0ZM10.3 -21.65a2.2 2.2 0 1 0 4.4 0a2.2 2.2 0 1 0 -4.4 0ZM14.14 -18.92a2.2 2.2 0 1 0 4.4 0a2.2 2.2 0 1 0 -4.4 0ZM12 -24.25a2 2 0 1 0 4 0a2 2 0 1 0 -4 0ZM2.27 -2.06L2.92 -0.94L24.57 -13.44L23.92 -14.56ZM24.63 -11.33L31.18 -18L22.13 -15.67ZM25.11 -12.5L27.21 -20.13L21.65 -14.5ZM23.38 -11.5L31.03 -13.5L23.38 -15.5ZM6.8 -0a2.2 2.2 0 1 0 4.4 0a2.2 2.2 0 1 0 -4.4 0ZM11.4 -0a2.6 2.6 0 1 0 5.2 0a2.6 2.6 0 1 0 -5.2 0ZM16.7 -0a2.3 2.3 0 1 0 4.6 0a2.3 2.3 0 1 0 -4.6 0ZM22.36 -4.68a2.2 2.2 0 1 0 4.4 0a2.2 2.2 0 1 0 -4.4 0ZM22.8 -0a2.2 2.2 0 1 0 4.4 0a2.2 2.2 0 1 0 -4.4 0ZM22.36 4.68a2.2 2.2 0 1 0 4.4 0a2.2 2.2 0 1 0 -4.4 0ZM26 -0a2 2 0 1 0 4 0a2 2 0 1 0 -4 0ZM2.92 0.94L2.27 2.06L23.92 14.56L24.57 13.44ZM22.13 15.67L31.18 18L24.63 11.33ZM23.38 15.5L31.03 13.5L23.38 11.5ZM21.65 14.5L27.21 20.13L25.11 12.5ZM2.3 7.79a2.2 2.2 0 1 0 4.4 0a2.2 2.2 0 1 0 -4.4 0ZM4.4 12.12a2.6 2.6 0 1 0 5.2 0a2.6 2.6 0 1 0 -5.2 0ZM7.2 16.45a2.3 2.3 0 1 0 4.6 0a2.3 2.3 0 1 0 -4.6 0ZM14.14 18.92a2.2 2.2 0 1 0 4.4 0a2.2 2.2 0 1 0 -4.4 0ZM10.3 21.65a2.2 2.2 0 1 0 4.4 0a2.2 2.2 0 1 0 -4.4 0ZM6.02 23.61a2.2 2.2 0 1 0 4.4 0a2.2 2.2 0 1 0 -4.4 0ZM12 24.25a2 2 0 1 0 4 0a2 2 0 1 0 -4 0ZM0.65 3L-0.65 3L-0.65 28L0.65 28ZM-2.5 27L0 36L2.5 27ZM-1.73 28L3.83 33.63L1.73 26ZM-1.73 26L-3.82 33.63L1.73 28ZM-6.7 7.79a2.2 2.2 0 1 0 4.4 0a2.2 2.2 0 1 0 -4.4 0ZM-9.6 12.12a2.6 2.6 0 1 0 5.2 0a2.6 2.6 0 1 0 -5.2 0ZM-11.8 16.45a2.3 2.3 0 1 0 4.6 0a2.3 2.3 0 1 0 -4.6 0ZM-10.42 23.61a2.2 2.2 0 1 0 4.4 0a2.2 2.2 0 1 0 -4.4 0ZM-14.7 21.65a2.2 2.2 0 1 0 4.4 0a2.2 2.2 0 1 0 -4.4 0ZM-18.54 18.92a2.2 2.2 0 1 0 4.4 0a2.2 2.2 0 1 0 -4.4 0ZM-16 24.25a2 2 0 1 0 4 0a2 2 0 1 0 -4 0ZM-2.27 2.06L-2.92 0.94L-24.57 13.44L-23.92 14.56ZM-24.63 11.33L-31.18 18L-22.13 15.67ZM-25.11 12.5L-27.21 20.13L-21.65 14.5ZM-23.38 11.5L-31.03 13.5L-23.38 15.5ZM-11.2 0a2.2 2.2 0 1 0 4.4 0a2.2 2.2 0 1 0 -4.4 0ZM-16.6 0a2.6 2.6 0 1 0 5.2 0a2.6 2.6 0 1 0 -5.2 0ZM-21.3 0a2.3 2.3 0 1 0 4.6 0a2.3 2.3 0 1 0 -4.6 0ZM-26.76 4.68a2.2 2.2 0 1 0 4.4 0a2.2 2.2 0 1 0 -4.4 0ZM-27.2 0a2.2 2.2 0 1 0 4.4 0a2.2 2.2 0 1 0 -4.4 0ZM-26.76 -4.68a2.2 2.2 0 1 0 4.4 0a2.2 2.2 0 1 0 -4.4 0ZM-30 0a2 2 0 1 0 4 0a2 2 0 1 0 -4 0ZM-2.92 -0.94L-2.27 -2.06L-23.92 -14.56L-24.57 -13.44ZM-22.13 -15.67L-31.18 -18L-24.63 -11.33ZM-23.38 -15.5L-31.03 -13.5L-23.38 -11.5ZM-21.65 -14.5L-27.21 -20.13L-25.11 -12.5ZM-6.7 -7.79a2.2 2.2 0 1 0 4.4 0a2.2 2.2 0 1 0 -4.4 0ZM-9.6 -12.12a2.6 2.6 0 1 0 5.2 0a2.6 2.6 0 1 0 -5.2 0ZM-11.8 -16.45a2.3 2.3 0 1 0 4.6 0a2.3 2.3 0 1 0 -4.6 0ZM-18.54 -18.92a2.2 2.2 0 1 0 4.4 0a2.2 2.2 0 1 0 -4.4 0ZM-14.7 -21.65a2.2 2.2 0 1 0 4.4 0a2.2 2.2 0 1 0 -4.4 0ZM-10.42 -23.61a2.2 2.2 0 1 0 4.4 0a2.2 2.2 0 1 0 -4.4 0ZM-16 -24.25a2 2 0 1 0 4 0a2 2 0 1 0 -4 0Z"/><path transform="translate(1073.5 480.4)" d="M-4 -6.93L-11.26 -6.5L-8 0L-11.26 6.5L-4 6.93L0 13L4 6.93L11.26 6.5L8 -0L11.26 -6.5L4 -6.93L0 -13ZM-2.5 0L2.5 0L0.5 -34L-0.5 -34ZM2.17 -23.69L-7.39 -31.46L-2.17 -20.31ZM2.17 -20.31L7.39 -31.46L-2.17 -23.69ZM1.7 -30.06L-3.71 -34.94L-1.7 -27.94ZM1.7 -27.94L3.71 -34.94L-1.7 -30.06ZM1.41 -15.41L-4.95 -18.95L-1.41 -12.59ZM1.41 -12.59L4.95 -18.95L-1.41 -15.41ZM-1.73 -1L1.73 1L15.43 -25.73L14.57 -26.23ZM11.98 -16.8L8.11 -26.36L7.02 -16.11ZM10.44 -14.14L18.77 -20.2L8.56 -18.77ZM14.25 -21.71L12.29 -27.65L10.75 -21.59ZM13.32 -20.11L17.8 -24.47L11.68 -23.2ZM-1.25 -2.17L1.25 2.17L29.69 -16.57L29.19 -17.43ZM21.6 -9.97L23.55 -22.13L16.5 -12.03ZM18.67 -8.28L30.94 -9.33L19.44 -13.72ZM26.88 -13.56L28.4 -20.68L23.35 -15.44ZM25.04 -12.5L32.11 -14.26L25.18 -16.5ZM14.06 -6.48L13.94 -13.76L10.19 -7.52ZM11.61 -5.07L18.89 -5.19L12.64 -8.93ZM-0 -2L0 2L30 0.5L30 -0.5ZM20.54 1.97L26.88 -6.16L17.46 -1.97ZM17.46 1.97L26.88 6.16L20.54 -1.97ZM25.93 1.48L30.09 -3.18L24.07 -1.48ZM24.07 1.48L30.09 3.18L25.93 -1.48ZM1.25 -2.17L-1.25 2.17L29.19 17.43L29.69 16.57ZM19.44 13.72L30.94 9.33L18.67 8.28ZM16.5 12.03L23.55 22.13L21.6 9.97ZM25.18 16.5L32.11 14.26L25.04 12.5ZM23.35 15.44L28.4 20.68L26.88 13.56ZM12.64 8.93L18.89 5.19L11.61 5.07ZM10.19 7.52L13.94 13.76L14.06 6.48ZM1.73 -1L-1.73 1L14.57 26.23L15.43 25.73ZM8.56 18.77L18.77 20.2L10.44 14.14ZM7.02 16.11L8.11 26.36L11.98 16.8ZM11.68 23.2L17.8 24.47L13.32 20.11ZM10.75 21.59L12.29 27.65L14.25 21.71ZM2.5 -0L-2.5 0L-0.5 34L0.5 34ZM-2.17 23.69L7.39 31.46L2.17 20.31ZM-2.17 20.31L-7.39 31.46L2.17 23.69ZM-1.7 30.06L3.71 34.94L1.7 27.94ZM-1.7 27.94L-3.71 34.94L1.7 30.06ZM-1.41 15.41L4.95 18.95L1.41 12.59ZM-1.41 12.59L-4.95 18.95L1.41 15.41ZM1.73 1L-1.73 -1L-15.43 25.73L-14.57 26.23ZM-11.98 16.8L-8.11 26.36L-7.02 16.11ZM-10.44 14.14L-18.77 20.2L-8.56 18.77ZM-14.25 21.71L-12.29 27.65L-10.75 21.59ZM-13.32 20.11L-17.8 24.47L-11.68 23.2ZM1.25 2.17L-1.25 -2.17L-29.69 16.57L-29.19 17.43ZM-21.6 9.97L-23.55 22.13L-16.5 12.03ZM-18.67 8.28L-30.94 9.33L-19.44 13.72ZM-26.88 13.56L-28.4 20.68L-23.35 15.44ZM-25.04 12.5L-32.11 14.26L-25.18 16.5ZM-14.06 6.48L-13.94 13.76L-10.19 7.52ZM-11.61 5.07L-18.89 5.19L-12.64 8.93ZM0 2L-0 -2L-30 -0.5L-30 0.5ZM-20.54 -1.97L-26.88 6.16L-17.46 1.97ZM-17.46 -1.97L-26.88 -6.16L-20.54 1.97ZM-25.93 -1.48L-30.09 3.18L-24.07 1.48ZM-24.07 -1.48L-30.09 -3.18L-25.93 1.48ZM-1.25 2.17L1.25 -2.17L-29.19 -17.43L-29.69 -16.57ZM-19.44 -13.72L-30.94 -9.33L-18.67 -8.28ZM-16.5 -12.03L-23.55 -22.13L-21.6 -9.97ZM-25.18 -16.5L-32.11 -14.26L-25.04 -12.5ZM-23.35 -15.44L-28.4 -20.68L-26.88 -13.56ZM-12.64 -8.93L-18.89 -5.19L-11.61 -5.07ZM-10.19 -7.52L-13.94 -13.76L-14.06 -6.48ZM-1.73 1L1.73 -1L-14.57 -26.23L-15.43 -25.73ZM-8.56 -18.77L-18.77 -20.2L-10.44 -14.14ZM-7.02 -16.11L-8.11 -26.36L-11.98 -16.8ZM-11.68 -23.2L-17.8 -24.47L-13.32 -20.11ZM-10.75 -21.59L-12.29 -27.65L-14.25 -21.71Z"/><path transform="translate(666.9 576.1)" d="M0 0L6 -18.72L0 -26L-6 -18.72ZM-2.2 -28.5a2.2 2.2 0 1 0 4.4 0a2.2 2.2 0 1 0 -4.4 0ZM-6.58 -23.12L-9.77 -28.37L-9.04 -22.27ZM-7.28 -23.58L-11.93 -25.16L-8.35 -21.8ZM-6.84 -22.32L-6.09 -27.17L-8.78 -23.07ZM-7.08 -18.72L-5.94 -19.11L-7.57 -23.83L-8.71 -23.44ZM9.04 -22.27L9.77 -28.37L6.58 -23.12ZM8.78 -23.07L6.09 -27.17L6.84 -22.32ZM8.35 -21.8L11.93 -25.16L7.28 -23.58ZM5.94 -19.11L7.08 -18.72L8.71 -23.44L7.57 -23.83ZM0 0L19.21 -4.16L22.52 -13L13.21 -14.56ZM22.48 -14.25a2.2 2.2 0 1 0 4.4 0a2.2 2.2 0 1 0 -4.4 0ZM16.73 -17.26L19.68 -22.64L14.76 -18.97ZM16.79 -18.09L15.83 -22.91L14.71 -18.13ZM15.91 -17.09L20.49 -18.86L15.58 -19.14ZM12.67 -15.49L13.57 -14.7L16.85 -18.47L15.95 -19.26ZM23.81 -3.3L29.45 -5.72L23.31 -5.86ZM24.37 -3.92L26.58 -8.31L22.75 -5.23ZM23.05 -3.67L27.76 -2.25L24.06 -5.49ZM19.52 -4.41L19.75 -3.23L24.66 -4.18L24.43 -5.36ZM0 0L13.21 14.56L22.52 13L19.21 4.16ZM22.48 14.25a2.2 2.2 0 1 0 4.4 0a2.2 2.2 0 1 0 -4.4 0ZM23.31 5.86L29.45 5.72L23.81 3.3ZM24.06 5.49L27.76 2.25L23.05 3.67ZM22.75 5.23L26.58 8.31L24.37 3.92ZM19.75 3.23L19.52 4.41L24.43 5.36L24.66 4.18ZM14.76 18.97L19.68 22.64L16.73 17.26ZM15.58 19.14L20.49 18.86L15.91 17.09ZM14.71 18.13L15.83 22.91L16.79 18.09ZM13.57 14.7L12.67 15.49L15.95 19.26L16.85 18.47ZM0 0L-6 18.72L0 26L6 18.72ZM-2.2 28.5a2.2 2.2 0 1 0 4.4 0a2.2 2.2 0 1 0 -4.4 0ZM6.58 23.12L9.77 28.37L9.04 22.27ZM7.28 23.58L11.93 25.16L8.35 21.8ZM6.84 22.32L6.09 27.17L8.78 23.07ZM7.08 18.72L5.94 19.11L7.57 23.83L8.71 23.44ZM-9.04 22.27L-9.77 28.37L-6.58 23.12ZM-8.78 23.07L-6.09 27.17L-6.84 22.32ZM-8.35 21.8L-11.93 25.16L-7.28 23.58ZM-5.94 19.11L-7.08 18.72L-8.71 23.44L-7.57 23.83ZM0 0L-19.21 4.16L-22.52 13L-13.21 14.56ZM-26.88 14.25a2.2 2.2 0 1 0 4.4 0a2.2 2.2 0 1 0 -4.4 0ZM-16.73 17.26L-19.68 22.64L-14.76 18.97ZM-16.79 18.09L-15.83 22.91L-14.71 18.13ZM-15.91 17.09L-20.49 18.86L-15.58 19.14ZM-12.67 15.49L-13.57 14.7L-16.85 18.47L-15.95 19.26ZM-23.81 3.3L-29.45 5.72L-23.31 5.86ZM-24.37 3.92L-26.58 8.31L-22.75 5.23ZM-23.05 3.67L-27.76 2.25L-24.06 5.49ZM-19.52 4.41L-19.75 3.23L-24.66 4.18L-24.43 5.36ZM0 0L-13.21 -14.56L-22.52 -13L-19.21 -4.16ZM-26.88 -14.25a2.2 2.2 0 1 0 4.4 0a2.2 2.2 0 1 0 -4.4 0ZM-23.31 -5.86L-29.45 -5.72L-23.81 -3.3ZM-24.06 -5.49L-27.76 -2.25L-23.05 -3.67ZM-22.75 -5.23L-26.58 -8.31L-24.37 -3.92ZM-19.75 -3.23L-19.52 -4.41L-24.43 -5.36L-24.66 -4.18ZM-14.76 -18.97L-19.68 -22.64L-16.73 -17.26ZM-15.58 -19.14L-20.49 -18.86L-15.91 -17.09ZM-14.71 -18.13L-15.83 -22.91L-16.79 -18.09ZM-13.57 -14.7L-12.67 -15.49L-15.95 -19.26L-16.85 -18.47Z"/><path transform="translate(765.2 576)" d="M-6.5 0a6.5 6.5 0 1 0 13 0a6.5 6.5 0 1 0 -13 0ZM1.65 -7.36a2.6 2.6 0 1 0 5.2 0a2.6 2.6 0 1 0 -5.2 0ZM3.3 -11.26a3.2 3.2 0 1 0 6.4 0a3.2 3.2 0 1 0 -6.4 0ZM6.3 -15.59a2.7 2.7 0 1 0 5.4 0a2.7 2.7 0 1 0 -5.4 0ZM8.55 -18.62a2.2 2.2 0 1 0 4.4 0a2.2 2.2 0 1 0 -4.4 0ZM9.8 -21.65a2.7 2.7 0 1 0 5.4 0a2.7 2.7 0 1 0 -5.4 0ZM5.11 -22.69a2.7 2.7 0 1 0 5.4 0a2.7 2.7 0 1 0 -5.4 0ZM13.05 -18.11a2.7 2.7 0 1 0 5.4 0a2.7 2.7 0 1 0 -5.4 0ZM8.16 -26.89a2.7 2.7 0 1 0 5.4 0a2.7 2.7 0 1 0 -5.4 0ZM15.15 -22.85a2.7 2.7 0 1 0 5.4 0a2.7 2.7 0 1 0 -5.4 0ZM1.22 -3.91L2.78 -3.01L13.28 -21.2L11.72 -22.1ZM5.9 -0a2.6 2.6 0 1 0 5.2 0a2.6 2.6 0 1 0 -5.2 0ZM9.8 -0a3.2 3.2 0 1 0 6.4 0a3.2 3.2 0 1 0 -6.4 0ZM15.3 -0a2.7 2.7 0 1 0 5.4 0a2.7 2.7 0 1 0 -5.4 0ZM19.3 -0a2.2 2.2 0 1 0 4.4 0a2.2 2.2 0 1 0 -4.4 0ZM22.3 -0a2.7 2.7 0 1 0 5.4 0a2.7 2.7 0 1 0 -5.4 0ZM20.86 -4.58a2.7 2.7 0 1 0 5.4 0a2.7 2.7 0 1 0 -5.4 0ZM20.86 4.58a2.7 2.7 0 1 0 5.4 0a2.7 2.7 0 1 0 -5.4 0ZM26.02 -4.04a2.7 2.7 0 1 0 5.4 0a2.7 2.7 0 1 0 -5.4 0ZM26.02 4.04a2.7 2.7 0 1 0 5.4 0a2.7 2.7 0 1 0 -5.4 0ZM4 -0.9L4 0.9L25 0.9L25 -0.9ZM1.65 7.36a2.6 2.6 0 1 0 5.2 0a2.6 2.6 0 1 0 -5.2 0ZM3.3 11.26a3.2 3.2 0 1 0 6.4 0a3.2 3.2 0 1 0 -6.4 0ZM6.3 15.59a2.7 2.7 0 1 0 5.4 0a2.7 2.7 0 1 0 -5.4 0ZM8.55 18.62a2.2 2.2 0 1 0 4.4 0a2.2 2.2 0 1 0 -4.4 0ZM9.8 21.65a2.7 2.7 0 1 0 5.4 0a2.7 2.7 0 1 0 -5.4 0ZM13.05 18.11a2.7 2.7 0 1 0 5.4 0a2.7 2.7 0 1 0 -5.4 0ZM5.11 22.69a2.7 2.7 0 1 0 5.4 0a2.7 2.7 0 1 0 -5.4 0ZM15.15 22.85a2.7 2.7 0 1 0 5.4 0a2.7 2.7 0 1 0 -5.4 0ZM8.16 26.89a2.7 2.7 0 1 0 5.4 0a2.7 2.7 0 1 0 -5.4 0ZM2.78 3.01L1.22 3.91L11.72 22.1L13.28 21.2ZM-6.85 7.36a2.6 2.6 0 1 0 5.2 0a2.6 2.6 0 1 0 -5.2 0ZM-9.7 11.26a3.2 3.2 0 1 0 6.4 0a3.2 3.2 0 1 0 -6.4 0ZM-11.7 15.59a2.7 2.7 0 1 0 5.4 0a2.7 2.7 0 1 0 -5.4 0ZM-12.95 18.62a2.2 2.2 0 1 0 4.4 0a2.2 2.2 0 1 0 -4.4 0ZM-15.2 21.65a2.7 2.7 0 1 0 5.4 0a2.7 2.7 0 1 0 -5.4 0ZM-10.51 22.69a2.7 2.7 0 1 0 5.4 0a2.7 2.7 0 1 0 -5.4 0ZM-18.45 18.11a2.7 2.7 0 1 0 5.4 0a2.7 2.7 0 1 0 -5.4 0ZM-13.56 26.89a2.7 2.7 0 1 0 5.4 0a2.7 2.7 0 1 0 -5.4 0ZM-20.55 22.85a2.7 2.7 0 1 0 5.4 0a2.7 2.7 0 1 0 -5.4 0ZM-1.22 3.91L-2.78 3.01L-13.28 21.2L-11.72 22.1ZM-11.1 0a2.6 2.6 0 1 0 5.2 0a2.6 2.6 0 1 0 -5.2 0ZM-16.2 0a3.2 3.2 0 1 0 6.4 0a3.2 3.2 0 1 0 -6.4 0ZM-20.7 0a2.7 2.7 0 1 0 5.4 0a2.7 2.7 0 1 0 -5.4 0ZM-23.7 0a2.2 2.2 0 1 0 4.4 0a2.2 2.2 0 1 0 -4.4 0ZM-27.7 0a2.7 2.7 0 1 0 5.4 0a2.7 2.7 0 1 0 -5.4 0ZM-26.26 4.58a2.7 2.7 0 1 0 5.4 0a2.7 2.7 0 1 0 -5.4 0ZM-26.26 -4.58a2.7 2.7 0 1 0 5.4 0a2.7 2.7 0 1 0 -5.4 0ZM-31.42 4.04a2.7 2.7 0 1 0 5.4 0a2.7 2.7 0 1 0 -5.4 0ZM-31.42 -4.04a2.7 2.7 0 1 0 5.4 0a2.7 2.7 0 1 0 -5.4 0ZM-4 0.9L-4 -0.9L-25 -0.9L-25 0.9ZM-6.85 -7.36a2.6 2.6 0 1 0 5.2 0a2.6 2.6 0 1 0 -5.2 0ZM-9.7 -11.26a3.2 3.2 0 1 0 6.4 0a3.2 3.2 0 1 0 -6.4 0ZM-11.7 -15.59a2.7 2.7 0 1 0 5.4 0a2.7 2.7 0 1 0 -5.4 0ZM-12.95 -18.62a2.2 2.2 0 1 0 4.4 0a2.2 2.2 0 1 0 -4.4 0ZM-15.2 -21.65a2.7 2.7 0 1 0 5.4 0a2.7 2.7 0 1 0 -5.4 0ZM-18.45 -18.11a2.7 2.7 0 1 0 5.4 0a2.7 2.7 0 1 0 -5.4 0ZM-10.51 -22.69a2.7 2.7 0 1 0 5.4 0a2.7 2.7 0 1 0 -5.4 0ZM-20.55 -22.85a2.7 2.7 0 1 0 5.4 0a2.7 2.7 0 1 0 -5.4 0ZM-13.56 -26.89a2.7 2.7 0 1 0 5.4 0a2.7 2.7 0 1 0 -5.4 0ZM-2.78 -3.01L-1.22 -3.91L-11.72 -22.1L-13.28 -21.2Z"/><path transform="translate(869.5 576)" d="M0 0L0.8 -5L0 -10L-0.8 -5ZM0 0L1.76 -4.75L1.95 -9.81L0.19 -5.06ZM0 0L2.65 -4.31L3.83 -9.24L1.17 -4.93ZM0 0L3.44 -3.71L5.56 -8.31L2.11 -4.6ZM0 0L4.1 -2.97L7.07 -7.07L2.97 -4.1ZM0 0L4.6 -2.11L8.31 -5.56L3.71 -3.44ZM0 0L4.93 -1.17L9.24 -3.83L4.31 -2.65ZM0 0L5.06 -0.19L9.81 -1.95L4.75 -1.76ZM0 0L5 0.8L10 -0L5 -0.8ZM0 0L4.75 1.76L9.81 1.95L5.06 0.19ZM0 0L4.31 2.65L9.24 3.83L4.93 1.17ZM0 0L3.71 3.44L8.31 5.56L4.6 2.11ZM0 0L2.97 4.1L7.07 7.07L4.1 2.97ZM0 0L2.11 4.6L5.56 8.31L3.44 3.71ZM0 0L1.17 4.93L3.83 9.24L2.65 4.31ZM0 0L0.19 5.06L1.95 9.81L1.76 4.75ZM0 0L-0.8 5L0 10L0.8 5ZM0 0L-1.76 4.75L-1.95 9.81L-0.19 5.06ZM0 0L-2.65 4.31L-3.83 9.24L-1.17 4.93ZM0 0L-3.44 3.71L-5.56 8.31L-2.11 4.6ZM0 0L-4.1 2.97L-7.07 7.07L-2.97 4.1ZM0 0L-4.6 2.11L-8.31 5.56L-3.71 3.44ZM0 0L-4.93 1.17L-9.24 3.83L-4.31 2.65ZM0 0L-5.06 0.19L-9.81 1.95L-4.75 1.76ZM0 0L-5 -0.8L-10 0L-5 0.8ZM0 0L-4.75 -1.76L-9.81 -1.95L-5.06 -0.19ZM0 0L-4.31 -2.65L-9.24 -3.83L-4.93 -1.17ZM0 0L-3.71 -3.44L-8.31 -5.56L-4.6 -2.11ZM0 0L-2.97 -4.1L-7.07 -7.07L-4.1 -2.97ZM0 0L-2.11 -4.6L-5.56 -8.31L-3.44 -3.71ZM0 0L-1.17 -4.93L-3.83 -9.24L-2.65 -4.31ZM0 0L-0.19 -5.06L-1.95 -9.81L-1.76 -4.75ZM-6.5 0a6.5 6.5 0 1 0 13 0a6.5 6.5 0 1 0 -13 0ZM-0.5 -5L0.5 -5L0.5 -28L-0.5 -28ZM-0.63 -26.92L4.33 -25.5L0.62 -29.08ZM-0.62 -29.08L-4.33 -25.5L0.63 -26.92ZM1.5 -28L0 -30.5L-1.5 -28ZM1.07 -5.92L2.04 -5.67L5.14 -17.26L4.18 -17.52ZM3.95 -16.68L7.49 -14.56L5.37 -18.09ZM4.4 -18.35L0.8 -16.35L4.92 -16.42ZM2.07 -4.58L2.93 -4.08L14.43 -24L13.57 -24.5ZM12.92 -23.62L16.5 -19.92L15.08 -24.87ZM14 -25.5L9 -24.25L14 -23ZM15.3 -23.5L15.25 -26.41L12.7 -25ZM3.89 -4.6L4.6 -3.89L13.08 -12.37L12.37 -13.08ZM11.76 -12.47L13.76 -8.86L13.69 -12.99ZM12.99 -13.69L8.86 -13.76L12.47 -11.76ZM4.08 -2.93L4.58 -2.07L24.5 -13.57L24 -14.43ZM23 -14L24.25 -9L25.5 -14ZM24.87 -15.08L19.92 -16.5L23.62 -12.92ZM25 -12.7L26.41 -15.25L23.5 -15.3ZM5.67 -2.04L5.92 -1.07L17.52 -4.18L17.26 -5.14ZM16.42 -4.92L16.35 -0.8L18.35 -4.4ZM18.09 -5.37L14.56 -7.49L16.68 -3.95ZM5 -0.5L5 0.5L28 0.5L28 -0.5ZM26.92 -0.63L25.5 4.33L29.08 0.62ZM29.08 -0.63L25.5 -4.33L26.92 0.62ZM28 1.5L30.5 -0L28 -1.5ZM5.92 1.07L5.67 2.04L17.26 5.14L17.52 4.18ZM16.68 3.95L14.56 7.49L18.09 5.37ZM18.35 4.4L16.35 0.8L16.42 4.92ZM4.58 2.07L4.08 2.93L24 14.43L24.5 13.57ZM23.62 12.92L19.92 16.5L24.87 15.08ZM25.5 14L24.25 9L23 14ZM23.5 15.3L26.41 15.25L25 12.7ZM4.6 3.89L3.89 4.6L12.37 13.08L13.08 12.37ZM12.47 11.76L8.86 13.76L12.99 13.69ZM13.69 12.99L13.76 8.86L11.76 12.47ZM2.93 4.08L2.07 4.58L13.57 24.5L14.43 24ZM14 23L9 24.25L14 25.5ZM15.08 24.87L16.5 19.92L12.92 23.62ZM12.7 25L15.25 26.41L15.3 23.5ZM2.04 5.67L1.07 5.92L4.18 17.52L5.14 17.26ZM4.92 16.42L0.8 16.35L4.4 18.35ZM5.37 18.09L7.49 14.56L3.95 16.68ZM0.5 5L-0.5 5L-0.5 28L0.5 28ZM0.63 26.92L-4.33 25.5L-0.62 29.08ZM0.63 29.08L4.33 25.5L-0.62 26.92ZM-1.5 28L0 30.5L1.5 28ZM-1.07 5.92L-2.04 5.67L-5.14 17.26L-4.18 17.52ZM-3.95 16.68L-7.49 14.56L-5.37 18.09ZM-4.4 18.35L-0.8 16.35L-4.92 16.42ZM-2.07 4.58L-2.93 4.08L-14.43 24L-13.57 24.5ZM-12.92 23.62L-16.5 19.92L-15.08 24.87ZM-14 25.5L-9 24.25L-14 23ZM-15.3 23.5L-15.25 26.41L-12.7 25ZM-3.89 4.6L-4.6 3.89L-13.08 12.37L-12.37 13.08ZM-11.76 12.47L-13.76 8.86L-13.69 12.99ZM-12.99 13.69L-8.86 13.76L-12.47 11.76ZM-4.08 2.93L-4.58 2.07L-24.5 13.57L-24 14.43ZM-23 14L-24.25 9L-25.5 14ZM-24.87 15.08L-19.92 16.5L-23.62 12.92ZM-25 12.7L-26.41 15.25L-23.5 15.3ZM-5.67 2.04L-5.92 1.07L-17.52 4.18L-17.26 5.14ZM-16.42 4.92L-16.35 0.8L-18.35 4.4ZM-18.09 5.37L-14.56 7.49L-16.68 3.95ZM-5 0.5L-5 -0.5L-28 -0.5L-28 0.5ZM-26.92 0.63L-25.5 -4.33L-29.08 -0.62ZM-29.08 0.63L-25.5 4.33L-26.92 -0.62ZM-28 -1.5L-30.5 0L-28 1.5ZM-5.92 -1.07L-5.67 -2.04L-17.26 -5.14L-17.52 -4.18ZM-16.68 -3.95L-14.56 -7.49L-18.09 -5.37ZM-18.35 -4.4L-16.35 -0.8L-16.42 -4.92ZM-4.58 -2.07L-4.08 -2.93L-24 -14.43L-24.5 -13.57ZM-23.62 -12.92L-19.92 -16.5L-24.87 -15.08ZM-25.5 -14L-24.25 -9L-23 -14ZM-23.5 -15.3L-26.41 -15.25L-25 -12.7ZM-4.6 -3.89L-3.89 -4.6L-12.37 -13.08L-13.08 -12.37ZM-12.47 -11.76L-8.86 -13.76L-12.99 -13.69ZM-13.69 -12.99L-13.76 -8.86L-11.76 -12.47ZM-2.93 -4.08L-2.07 -4.58L-13.57 -24.5L-14.43 -24ZM-14 -23L-9 -24.25L-14 -25.5ZM-15.08 -24.87L-16.5 -19.92L-12.92 -23.62ZM-12.7 -25L-15.25 -26.41L-15.3 -23.5ZM-2.04 -5.67L-1.07 -5.92L-4.18 -17.52L-5.14 -17.26ZM-4.92 -16.42L-0.8 -16.35L-4.4 -18.35ZM-5.37 -18.09L-7.49 -14.56L-3.95 -16.68Z"/><path transform="translate(974.8 575.8)" d="M-3 0a3 3 0 1 0 6 0a3 3 0 1 0 -6 0ZM-1 0L1 0L1 -22L-1 -22ZM2.5 -20L0 -31L-2.5 -20ZM1.84 -21.06L-4.4 -27.62L-1.84 -18.94ZM1.84 -18.94L4.4 -27.62L-1.84 -21.06ZM-4.02 -4.54L-2.51 -5.52L-9.59 -16.42L-11.1 -15.44ZM-7.37 -15.48L-14.71 -22.64L-11.15 -13.03ZM-8.39 -15.96L-16.39 -17.89L-10.13 -12.55ZM-7.35 -14.36L-9.68 -22.25L-11.17 -14.16ZM2.51 -5.52L4.02 -4.54L11.1 -15.44L9.59 -16.42ZM11.15 -13.03L14.71 -22.64L7.37 -15.48ZM11.17 -14.16L9.68 -22.25L7.35 -14.36ZM10.13 -12.55L16.39 -17.89L8.39 -15.96ZM-0 -1L0 1L22 1L22 -1ZM20 2.5L31 -0L20 -2.5ZM21.06 1.84L27.62 -4.4L18.94 -1.84ZM18.94 1.84L27.62 4.4L21.06 -1.84ZM4.54 -4.02L5.52 -2.51L16.42 -9.59L15.44 -11.1ZM15.48 -7.37L22.64 -14.71L13.03 -11.15ZM15.96 -8.39L17.89 -16.39L12.55 -10.13ZM14.36 -7.35L22.25 -9.68L14.16 -11.17ZM5.52 2.51L4.54 4.02L15.44 11.1L16.42 9.59ZM13.03 11.15L22.64 14.71L15.48 7.37ZM14.16 11.17L22.25 9.68L14.36 7.35ZM12.55 10.13L17.89 16.39L15.96 8.39ZM1 -0L-1 0L-1 22L1 22ZM-2.5 20L0 31L2.5 20ZM-1.84 21.06L4.4 27.62L1.84 18.94ZM-1.84 18.94L-4.4 27.62L1.84 21.06ZM4.02 4.54L2.51 5.52L9.59 16.42L11.1 15.44ZM7.37 15.48L14.71 22.64L11.15 13.03ZM8.39 15.96L16.39 17.89L10.13 12.55ZM7.35 14.36L9.68 22.25L11.17 14.16ZM-2.51 5.52L-4.02 4.54L-11.1 15.44L-9.59 16.42ZM-11.15 13.03L-14.71 22.64L-7.37 15.48ZM-11.17 14.16L-9.68 22.25L-7.35 14.36ZM-10.13 12.55L-16.39 17.89L-8.39 15.96ZM0 1L-0 -1L-22 -1L-22 1ZM-20 -2.5L-31 0L-20 2.5ZM-21.06 -1.84L-27.62 4.4L-18.94 1.84ZM-18.94 -1.84L-27.62 -4.4L-21.06 1.84ZM-4.54 4.02L-5.52 2.51L-16.42 9.59L-15.44 11.1ZM-15.48 7.37L-22.64 14.71L-13.03 11.15ZM-15.96 8.39L-17.89 16.39L-12.55 10.13ZM-14.36 7.35L-22.25 9.68L-14.16 11.17ZM-5.52 -2.51L-4.54 -4.02L-15.44 -11.1L-16.42 -9.59ZM-13.03 -11.15L-22.64 -14.71L-15.48 -7.37ZM-14.16 -11.17L-22.25 -9.68L-14.36 -7.35ZM-12.55 -10.13L-17.89 -16.39L-15.96 -8.39Z"/><path transform="translate(1074 575.8)" d="M-1.11 -12.96L-15.57 -20.45L-4.81 -8.23ZM1.43 -12.32L-8.95 -26.18L-4.41 -9.47ZM3.5 -11L0 -31L-3.5 -11ZM4.41 -9.47L8.95 -26.18L-1.43 -12.32ZM4.81 -8.23L15.57 -20.45L1.11 -12.96ZM4.23 -9.06L9 -10.72L-9 -10.72L-4.23 -9.06ZM12.96 -1.11L20.45 -15.57L8.23 -4.81ZM12.32 1.43L26.18 -8.95L9.47 -4.41ZM11 3.5L31 -0L11 -3.5ZM9.47 4.41L26.18 8.95L12.32 -1.43ZM8.23 4.81L20.45 15.57L12.96 1.11ZM9.06 4.23L10.72 9L10.72 -9L9.06 -4.23ZM1.11 12.96L15.57 20.45L4.81 8.23ZM-1.43 12.32L8.95 26.18L4.41 9.47ZM-3.5 11L0 31L3.5 11ZM-4.41 9.47L-8.95 26.18L1.43 12.32ZM-4.81 8.23L-15.57 20.45L-1.11 12.96ZM-4.23 9.06L-9 10.72L9 10.72L4.23 9.06ZM-12.96 1.11L-20.45 15.57L-8.23 4.81ZM-12.32 -1.43L-26.18 8.95L-9.47 4.41ZM-11 -3.5L-31 0L-11 3.5ZM-9.47 -4.41L-26.18 -8.95L-12.32 1.43ZM-8.23 -4.81L-20.45 -15.57L-12.96 -1.11ZM-9.06 -4.23L-10.72 -9L-10.72 9L-9.06 4.23ZM0 0L1.6 -2.4L0 -8L-1.6 -2.4ZM0 0L2.83 -0.57L5.66 -5.66L0.57 -2.83ZM0 0L2.4 1.6L8 -0L2.4 -1.6ZM0 0L0.57 2.83L5.66 5.66L2.83 0.57ZM0 0L-1.6 2.4L0 8L1.6 2.4ZM0 0L-2.83 0.57L-5.66 5.66L-0.57 2.83ZM0 0L-2.4 -1.6L-8 0L-2.4 1.6ZM0 0L-0.57 -2.83L-5.66 -5.66L-2.83 -0.57Z"/><path transform="translate(666.9 664)" d="M0 -26L1.5 -28.93L0 -32.5L-1.5 -28.93ZM0 -26L3.28 -26.16L5.63 -29.25L1.78 -28.76ZM0 -26L1.78 -23.24L5.63 -22.75L3.28 -25.84ZM0 -26L-1.5 -23.07L0 -19.5L1.5 -23.07ZM0 -26L-3.28 -25.84L-5.63 -22.75L-1.78 -23.24ZM0 -26L-1.78 -28.76L-5.63 -29.25L-3.28 -26.16ZM-2.8 -26a2.8 2.8 0 1 0 5.6 0a2.8 2.8 0 1 0 -5.6 0ZM-1.21 -0.7L1.21 0.7L14.71 -22.68L12.29 -24.08ZM0 0L5.5 -6.8L0 -17L-5.5 -6.8ZM22.52 -13L24.02 -15.93L22.52 -19.5L21.02 -15.93ZM22.52 -13L25.8 -13.16L28.15 -16.25L24.3 -15.76ZM22.52 -13L24.3 -10.24L28.15 -9.75L25.8 -12.84ZM22.52 -13L21.02 -10.08L22.52 -6.5L24.02 -10.08ZM22.52 -13L19.23 -12.84L16.89 -9.75L20.73 -10.24ZM22.52 -13L20.73 -15.76L16.89 -16.25L19.23 -13.16ZM19.72 -13a2.8 2.8 0 1 0 5.6 0a2.8 2.8 0 1 0 -5.6 0ZM-0 -1.4L0 1.4L27 1.4L27 -1.4ZM0 0L8.64 1.36L14.72 -8.5L3.14 -8.16ZM22.52 13L24.02 10.07L22.52 6.5L21.02 10.07ZM22.52 13L25.8 12.84L28.15 9.75L24.3 10.24ZM22.52 13L24.3 15.76L28.15 16.25L25.8 13.16ZM22.52 13L21.02 15.92L22.52 19.5L24.02 15.92ZM22.52 13L19.23 13.16L16.89 16.25L20.73 15.76ZM22.52 13L20.73 10.24L16.89 9.75L19.23 12.84ZM19.72 13a2.8 2.8 0 1 0 5.6 0a2.8 2.8 0 1 0 -5.6 0ZM1.21 -0.7L-1.21 0.7L12.29 24.08L14.71 22.68ZM0 0L3.14 8.16L14.72 8.5L8.64 -1.36ZM0 26L1.5 23.07L0 19.5L-1.5 23.07ZM0 26L3.28 25.84L5.63 22.75L1.78 23.24ZM0 26L1.78 28.76L5.63 29.25L3.28 26.16ZM0 26L-1.5 28.93L0 32.5L1.5 28.93ZM0 26L-3.28 26.16L-5.63 29.25L-1.78 28.76ZM0 26L-1.78 23.24L-5.63 22.75L-3.28 25.84ZM-2.8 26a2.8 2.8 0 1 0 5.6 0a2.8 2.8 0 1 0 -5.6 0ZM1.21 0.7L-1.21 -0.7L-14.71 22.68L-12.29 24.08ZM0 0L-5.5 6.8L0 17L5.5 6.8ZM-22.52 13L-21.02 10.08L-22.52 6.5L-24.02 10.08ZM-22.52 13L-19.23 12.84L-16.89 9.75L-20.73 10.24ZM-22.52 13L-20.73 15.76L-16.89 16.25L-19.23 13.16ZM-22.52 13L-24.02 15.93L-22.52 19.5L-21.02 15.93ZM-22.52 13L-25.8 13.16L-28.15 16.25L-24.3 15.76ZM-22.52 13L-24.3 10.24L-28.15 9.75L-25.8 12.84ZM-25.32 13a2.8 2.8 0 1 0 5.6 0a2.8 2.8 0 1 0 -5.6 0ZM0 1.4L-0 -1.4L-27 -1.4L-27 1.4ZM0 0L-8.64 -1.36L-14.72 8.5L-3.14 8.16ZM-22.52 -13L-21.02 -15.93L-22.52 -19.5L-24.02 -15.93ZM-22.52 -13L-19.23 -13.16L-16.89 -16.25L-20.73 -15.76ZM-22.52 -13L-20.73 -10.24L-16.89 -9.75L-19.23 -12.84ZM-22.52 -13L-24.02 -10.08L-22.52 -6.5L-21.02 -10.08ZM-22.52 -13L-25.8 -12.84L-28.15 -9.75L-24.3 -10.24ZM-22.52 -13L-24.3 -15.76L-28.15 -16.25L-25.8 -13.16ZM-25.32 -13a2.8 2.8 0 1 0 5.6 0a2.8 2.8 0 1 0 -5.6 0ZM-1.21 0.7L1.21 -0.7L-12.29 -24.08L-14.71 -22.68ZM0 0L-3.14 -8.16L-14.72 -8.5L-8.64 1.36Z"/><path transform="translate(765.3 664)" d="M3.39 -13.58L0 -25L-3.39 -13.58L0 -3ZM13.46 -3.86L21.65 -12.5L10.07 -9.73L2.6 -1.5ZM10.07 9.73L21.65 12.5L13.46 3.86L2.6 1.5ZM-3.39 13.58L0 25L3.39 13.58L0 3ZM-13.46 3.86L-21.65 12.5L-10.07 9.73L-2.6 1.5ZM-10.07 -9.73L-21.65 -12.5L-13.46 -3.86L-2.6 -1.5Z" fill="none" stroke="#51a0dd" stroke-width="2.6" stroke-linejoin="miter"/><path transform="translate(765.3 664)" d="M1.5 -25L0 -31L-1.5 -25ZM0.98 -25.69L-2.75 -28.93L-0.98 -24.31ZM0.98 -24.31L2.75 -28.93L-0.98 -25.69ZM-9.64 -14.02L-8.37 -14.81L-12.08 -20.75L-13.35 -19.96ZM-11.13 -20.17L-14.84 -23.75L-13.25 -18.84ZM-11.88 -20.46L-15.99 -20.74L-12.5 -18.55ZM-11.2 -19.37L-11.63 -23.47L-13.18 -19.64ZM8.37 -14.81L9.64 -14.02L13.35 -19.96L12.08 -20.75ZM13.25 -18.84L14.84 -23.75L11.13 -20.17ZM13.18 -19.64L11.63 -23.47L11.2 -19.37ZM12.5 -18.55L15.99 -20.74L11.88 -20.46ZM22.4 -11.2L26.85 -15.5L20.9 -13.8ZM22.74 -11.99L23.68 -16.85L20.56 -13.01ZM21.55 -11.3L26.43 -12.08L21.76 -13.7ZM7.32 -15.36L8.64 -14.66L11.93 -20.84L10.61 -21.54ZM11.9 -19.72L13.15 -24.72L9.69 -20.89ZM11.78 -20.52L9.97 -24.22L9.82 -20.1ZM11.17 -19.38L14.51 -21.81L10.42 -21.23ZM17.02 -0.16L16.96 1.34L23.96 1.59L24.01 0.09ZM22.94 2.05L27.98 0.98L23.03 -0.45ZM23.6 1.59L26.14 -1.66L22.37 0.01ZM22.32 1.55L25.96 3.48L23.66 0.06ZM20.9 13.8L26.85 15.5L22.4 11.2ZM21.76 13.7L26.43 12.08L21.55 11.3ZM20.56 13.01L23.68 16.85L22.74 11.99ZM16.96 -1.34L17.02 0.16L24.01 -0.09L23.96 -1.59ZM23.03 0.45L27.98 -0.98L22.94 -2.05ZM23.66 -0.06L25.96 -3.48L22.32 -1.55ZM22.37 -0.01L26.14 1.66L23.6 -1.59ZM8.64 14.66L7.32 15.36L10.61 21.54L11.93 20.84ZM9.69 20.89L13.15 24.72L11.9 19.72ZM10.42 21.23L14.51 21.81L11.17 19.38ZM9.82 20.1L9.97 24.22L11.78 20.52ZM-1.5 25L0 31L1.5 25ZM-0.98 25.69L2.75 28.93L0.98 24.31ZM-0.98 24.31L-2.75 28.93L0.98 25.69ZM9.64 14.02L8.37 14.81L12.08 20.75L13.35 19.96ZM11.13 20.17L14.84 23.75L13.25 18.84ZM11.88 20.46L15.99 20.74L12.5 18.55ZM11.2 19.37L11.63 23.47L13.18 19.64ZM-8.37 14.81L-9.64 14.02L-13.35 19.96L-12.08 20.75ZM-13.25 18.84L-14.84 23.75L-11.13 20.17ZM-13.18 19.64L-11.63 23.47L-11.2 19.37ZM-12.5 18.55L-15.99 20.74L-11.88 20.46ZM-22.4 11.2L-26.85 15.5L-20.9 13.8ZM-22.74 11.99L-23.68 16.85L-20.56 13.01ZM-21.55 11.3L-26.43 12.08L-21.76 13.7ZM-7.32 15.36L-8.64 14.66L-11.93 20.84L-10.61 21.54ZM-11.9 19.72L-13.15 24.72L-9.69 20.89ZM-11.78 20.52L-9.97 24.22L-9.82 20.1ZM-11.17 19.38L-14.51 21.81L-10.42 21.23ZM-17.02 0.16L-16.96 -1.34L-23.96 -1.59L-24.01 -0.09ZM-22.94 -2.05L-27.98 -0.98L-23.03 0.45ZM-23.6 -1.59L-26.14 1.66L-22.37 -0.01ZM-22.32 -1.55L-25.96 -3.48L-23.66 -0.06ZM-20.9 -13.8L-26.85 -15.5L-22.4 -11.2ZM-21.76 -13.7L-26.43 -12.08L-21.55 -11.3ZM-20.56 -13.01L-23.68 -16.85L-22.74 -11.99ZM-16.96 1.34L-17.02 -0.16L-24.01 0.09L-23.96 1.59ZM-23.03 -0.45L-27.98 0.98L-22.94 2.05ZM-23.66 0.06L-25.96 3.48L-22.32 1.55ZM-22.37 0.01L-26.14 -1.66L-23.6 1.59ZM-8.64 -14.66L-7.32 -15.36L-10.61 -21.54L-11.93 -20.84ZM-9.69 -20.89L-13.15 -24.72L-11.9 -19.72ZM-10.42 -21.23L-14.51 -21.81L-11.17 -19.38ZM-9.82 -20.1L-9.97 -24.22L-11.78 -20.52Z"/><path transform="translate(869.5 664)" d="M-1.5 0L1.5 0L1.5 -31L-1.5 -31ZM1.5 -29L0 -35L-1.5 -29ZM0.98 -29.69L-2.75 -32.93L-0.98 -28.31ZM0.98 -28.31L2.75 -32.93L-0.98 -29.69ZM0.86 -8.1L-5.52 -11.31L-0.86 -5.9ZM0.86 -5.9L5.52 -11.31L-0.86 -8.1ZM0.86 -13.1L-7.09 -17.54L-0.86 -10.9ZM0.86 -10.9L7.09 -17.54L-0.86 -13.1ZM0.86 -18.1L-7.88 -23.16L-0.86 -15.9ZM0.86 -15.9L7.88 -23.16L-0.86 -18.1ZM0.86 -23.1L-7.09 -27.54L-0.86 -20.9ZM0.86 -20.9L7.09 -27.54L-0.86 -23.1ZM0.86 -28.1L-4.73 -30.69L-0.86 -25.9ZM0.86 -25.9L4.73 -30.69L-0.86 -28.1ZM-0.75 -1.3L0.75 1.3L27.6 -14.2L26.1 -16.8ZM25.86 -13.2L30.31 -17.5L24.36 -15.8ZM26.2 -13.99L27.14 -18.85L24.03 -15.01ZM25.01 -13.3L29.9 -14.08L25.22 -15.7ZM7.45 -3.31L7.04 -10.43L4.68 -3.69ZM5.54 -2.2L12.55 -0.88L6.59 -4.8ZM11.78 -5.81L11.64 -14.91L9.01 -6.19ZM9.87 -4.7L18.74 -2.63L10.92 -7.3ZM16.11 -8.31L16.11 -18.4L13.34 -8.69ZM14.2 -7.2L23.99 -4.75L15.25 -9.8ZM20.44 -10.81L20.31 -19.91L17.67 -11.19ZM18.53 -9.7L27.4 -7.63L19.58 -12.3ZM24.77 -13.31L24.22 -19.44L22 -13.69ZM22.86 -12.2L28.95 -11.25L23.91 -14.8ZM0.75 -1.3L-0.75 1.3L26.1 16.8L27.6 14.2ZM24.36 15.8L30.31 17.5L25.86 13.2ZM25.22 15.7L29.9 14.08L25.01 13.3ZM24.03 15.01L27.14 18.85L26.2 13.99ZM6.59 4.8L12.55 0.88L5.54 2.2ZM4.68 3.69L7.04 10.43L7.45 3.31ZM10.92 7.3L18.74 2.63L9.87 4.7ZM9.01 6.19L11.64 14.91L11.78 5.81ZM15.25 9.8L23.99 4.75L14.2 7.2ZM13.34 8.69L16.11 18.4L16.11 8.31ZM19.58 12.3L27.4 7.63L18.53 9.7ZM17.67 11.19L20.31 19.91L20.44 10.81ZM23.91 14.8L28.95 11.25L22.86 12.2ZM22 13.69L24.22 19.44L24.77 13.31ZM1.5 -0L-1.5 0L-1.5 31L1.5 31ZM-1.5 29L0 35L1.5 29ZM-0.98 29.69L2.75 32.93L0.98 28.31ZM-0.98 28.31L-2.75 32.93L0.98 29.69ZM-0.86 8.1L5.52 11.31L0.86 5.9ZM-0.86 5.9L-5.52 11.31L0.86 8.1ZM-0.86 13.1L7.09 17.54L0.86 10.9ZM-0.86 10.9L-7.09 17.54L0.86 13.1ZM-0.86 18.1L7.88 23.16L0.86 15.9ZM-0.86 15.9L-7.88 23.16L0.86 18.1ZM-0.86 23.1L7.09 27.54L0.86 20.9ZM-0.86 20.9L-7.09 27.54L0.86 23.1ZM-0.86 28.1L4.73 30.69L0.86 25.9ZM-0.86 25.9L-4.73 30.69L0.86 28.1ZM0.75 1.3L-0.75 -1.3L-27.6 14.2L-26.1 16.8ZM-25.86 13.2L-30.31 17.5L-24.36 15.8ZM-26.2 13.99L-27.14 18.85L-24.03 15.01ZM-25.01 13.3L-29.9 14.08L-25.22 15.7ZM-7.45 3.31L-7.04 10.43L-4.68 3.69ZM-5.54 2.2L-12.55 0.88L-6.59 4.8ZM-11.78 5.81L-11.64 14.91L-9.01 6.19ZM-9.87 4.7L-18.74 2.63L-10.92 7.3ZM-16.11 8.31L-16.11 18.4L-13.34 8.69ZM-14.2 7.2L-23.99 4.75L-15.25 9.8ZM-20.44 10.81L-20.31 19.91L-17.67 11.19ZM-18.53 9.7L-27.4 7.63L-19.58 12.3ZM-24.77 13.31L-24.22 19.44L-22 13.69ZM-22.86 12.2L-28.95 11.25L-23.91 14.8ZM-0.75 1.3L0.75 -1.3L-26.1 -16.8L-27.6 -14.2ZM-24.36 -15.8L-30.31 -17.5L-25.86 -13.2ZM-25.22 -15.7L-29.9 -14.08L-25.01 -13.3ZM-24.03 -15.01L-27.14 -18.85L-26.2 -13.99ZM-6.59 -4.8L-12.55 -0.88L-5.54 -2.2ZM-4.68 -3.69L-7.04 -10.43L-7.45 -3.31ZM-10.92 -7.3L-18.74 -2.63L-9.87 -4.7ZM-9.01 -6.19L-11.64 -14.91L-11.78 -5.81ZM-15.25 -9.8L-23.99 -4.75L-14.2 -7.2ZM-13.34 -8.69L-16.11 -18.4L-16.11 -8.31ZM-19.58 -12.3L-27.4 -7.63L-18.53 -9.7ZM-17.67 -11.19L-20.31 -19.91L-20.44 -10.81ZM-23.91 -14.8L-28.95 -11.25L-22.86 -12.2ZM-22 -13.69L-24.22 -19.44L-24.77 -13.31Z"/><path transform="translate(974.8 663.8)" d="M-5.75 -9.96L-11.5 0L-5.75 9.96L5.75 9.96L11.5 -0L5.75 -9.96ZM3.27 -13.1L0 -18.5L-3.27 -13.1ZM-1.26 -20.86L1.26 -23.14L-5.68 -30.34L-7.7 -28.52ZM-1.59 -21.39L1.59 -22.61L-2.67 -32.76L-5.21 -31.78ZM-1.7 -22L1.7 -22L1.36 -34L-1.36 -34ZM-1.59 -22.61L1.59 -21.39L5.21 -31.78L2.67 -32.76ZM-1.26 -23.14L1.26 -20.86L7.7 -28.52L5.68 -30.34ZM0 -19L7.87 -19.47L4.17 -23.64L-4.17 -23.64L-7.87 -19.47ZM12.98 -3.72L16.02 -9.25L9.71 -9.38ZM17.44 -11.53L20.67 -10.47L23.44 -20.09L20.85 -20.93ZM17.73 -12.07L20.37 -9.93L27.03 -18.69L24.92 -20.4ZM18.2 -12.47L19.9 -9.53L30.12 -15.82L28.76 -18.18ZM18.79 -12.68L19.32 -9.32L30.13 -11.38L29.7 -14.06ZM19.41 -12.66L18.7 -9.34L28.55 -7.59L29.12 -10.25ZM16.45 -9.5L20.8 -2.92L22.55 -8.21L18.39 -15.43L12.93 -16.55ZM9.71 9.38L16.02 9.25L12.98 3.72ZM18.7 9.34L19.41 12.66L29.12 10.25L28.55 7.59ZM19.32 9.32L18.79 12.68L29.7 14.06L30.13 11.38ZM19.9 9.53L18.2 12.47L28.76 18.18L30.12 15.82ZM20.37 9.93L17.73 12.07L24.92 20.4L27.03 18.69ZM20.67 10.47L17.44 11.53L20.85 20.93L23.44 20.09ZM16.45 9.5L12.93 16.55L18.39 15.43L22.55 8.21L20.8 2.92ZM-3.27 13.1L0 18.5L3.27 13.1ZM1.26 20.86L-1.26 23.14L5.68 30.34L7.7 28.52ZM1.59 21.39L-1.59 22.61L2.67 32.76L5.21 31.78ZM1.7 22L-1.7 22L-1.36 34L1.36 34ZM1.59 22.61L-1.59 21.39L-5.21 31.78L-2.67 32.76ZM1.26 23.14L-1.26 20.86L-7.7 28.52L-5.68 30.34ZM0 19L-7.87 19.47L-4.17 23.64L4.17 23.64L7.87 19.47ZM-12.98 3.72L-16.02 9.25L-9.71 9.38ZM-17.44 11.53L-20.67 10.47L-23.44 20.09L-20.85 20.93ZM-17.73 12.07L-20.37 9.93L-27.03 18.69L-24.92 20.4ZM-18.2 12.47L-19.9 9.53L-30.12 15.82L-28.76 18.18ZM-18.79 12.68L-19.32 9.32L-30.13 11.38L-29.7 14.06ZM-19.41 12.66L-18.7 9.34L-28.55 7.59L-29.12 10.25ZM-16.45 9.5L-20.8 2.92L-22.55 8.21L-18.39 15.43L-12.93 16.55ZM-9.71 -9.38L-16.02 -9.25L-12.98 -3.72ZM-18.7 -9.34L-19.41 -12.66L-29.12 -10.25L-28.55 -7.59ZM-19.32 -9.32L-18.79 -12.68L-29.7 -14.06L-30.13 -11.38ZM-19.9 -9.53L-18.2 -12.47L-28.76 -18.18L-30.12 -15.82ZM-20.37 -9.93L-17.73 -12.07L-24.92 -20.4L-27.03 -18.69ZM-20.67 -10.47L-17.44 -11.53L-20.85 -20.93L-23.44 -20.09ZM-16.45 -9.5L-12.93 -16.55L-18.39 -15.43L-22.55 -8.21L-20.8 -2.92Z"/><path transform="translate(974.8 663.8)" fill="#fff" d="M-1.9 -3.29L-6.5 -3.75L-3.8 0L-6.5 3.75L-1.9 3.29L0 7.5L1.9 3.29L6.5 3.75L3.8 -0L6.5 -3.75L1.9 -3.29L0 -7.5Z"/><path transform="translate(1074 663.8)" d="M-1.6 -9L1.6 -9L1.6 -17L-1.6 -17ZM-6.5 -24a6.5 6.5 0 1 0 13 0a6.5 6.5 0 1 0 -13 0ZM0 -24L1.7 -26.85L0 -33.5L-1.7 -26.85ZM0 -24L3.05 -25.31L5.58 -31.69L0.3 -27.3ZM0 -24L3.24 -23.26L9.04 -26.94L2.19 -26.5ZM0 -24L2.19 -21.5L9.04 -21.06L3.24 -24.74ZM0 -24L0.3 -20.7L5.58 -16.31L3.05 -22.69ZM0 -24L-1.7 -21.15L0 -14.5L1.7 -21.15ZM0 -24L-3.05 -22.69L-5.58 -16.31L-0.3 -20.7ZM0 -24L-3.24 -24.74L-9.04 -21.06L-2.19 -21.5ZM0 -24L-2.19 -26.5L-9.04 -26.94L-3.24 -23.26ZM0 -24L-0.3 -27.3L-5.58 -31.69L-3.05 -25.31ZM6.99 -5.89L8.59 -3.11L15.52 -7.11L13.92 -9.89ZM14.28 -12a6.5 6.5 0 1 0 13 0a6.5 6.5 0 1 0 -13 0ZM20.78 -12L22.48 -14.85L20.78 -21.5L19.08 -14.85ZM20.78 -12L23.84 -13.31L26.37 -19.69L21.08 -15.3ZM20.78 -12L24.02 -11.26L29.82 -14.94L22.97 -14.5ZM20.78 -12L22.97 -9.5L29.82 -9.06L24.02 -12.74ZM20.78 -12L21.08 -8.7L26.37 -4.31L23.84 -10.69ZM20.78 -12L19.08 -9.15L20.78 -2.5L22.48 -9.15ZM20.78 -12L17.73 -10.69L15.2 -4.31L20.48 -8.7ZM20.78 -12L17.55 -12.74L11.75 -9.06L18.6 -9.5ZM20.78 -12L18.6 -14.5L11.75 -14.94L17.55 -11.26ZM20.78 -12L20.48 -15.3L15.2 -19.69L17.73 -13.31ZM8.59 3.11L6.99 5.89L13.92 9.89L15.52 7.11ZM14.28 12a6.5 6.5 0 1 0 13 0a6.5 6.5 0 1 0 -13 0ZM20.78 12L22.48 9.15L20.78 2.5L19.08 9.15ZM20.78 12L23.84 10.69L26.37 4.31L21.08 8.7ZM20.78 12L24.02 12.74L29.82 9.06L22.97 9.5ZM20.78 12L22.97 14.5L29.82 14.94L24.02 11.26ZM20.78 12L21.08 15.3L26.37 19.69L23.84 13.31ZM20.78 12L19.08 14.85L20.78 21.5L22.48 14.85ZM20.78 12L17.73 13.31L15.2 19.69L20.48 15.3ZM20.78 12L17.55 11.26L11.75 14.94L18.6 14.5ZM20.78 12L18.6 9.5L11.75 9.06L17.55 12.74ZM20.78 12L20.48 8.7L15.2 4.31L17.73 10.69ZM1.6 9L-1.6 9L-1.6 17L1.6 17ZM-6.5 24a6.5 6.5 0 1 0 13 0a6.5 6.5 0 1 0 -13 0ZM0 24L1.7 21.15L0 14.5L-1.7 21.15ZM0 24L3.05 22.69L5.58 16.31L0.3 20.7ZM0 24L3.24 24.74L9.04 21.06L2.19 21.5ZM0 24L2.19 26.5L9.04 26.94L3.24 23.26ZM0 24L0.3 27.3L5.58 31.69L3.05 25.31ZM0 24L-1.7 26.85L0 33.5L1.7 26.85ZM0 24L-3.05 25.31L-5.58 31.69L-0.3 27.3ZM0 24L-3.24 23.26L-9.04 26.94L-2.19 26.5ZM0 24L-2.19 21.5L-9.04 21.06L-3.24 24.74ZM0 24L-0.3 20.7L-5.58 16.31L-3.05 22.69ZM-6.99 5.89L-8.59 3.11L-15.52 7.11L-13.92 9.89ZM-27.28 12a6.5 6.5 0 1 0 13 0a6.5 6.5 0 1 0 -13 0ZM-20.78 12L-19.08 9.15L-20.78 2.5L-22.48 9.15ZM-20.78 12L-17.73 10.69L-15.2 4.31L-20.48 8.7ZM-20.78 12L-17.55 12.74L-11.75 9.06L-18.6 9.5ZM-20.78 12L-18.6 14.5L-11.75 14.94L-17.55 11.26ZM-20.78 12L-20.48 15.3L-15.2 19.69L-17.73 13.31ZM-20.78 12L-22.48 14.85L-20.78 21.5L-19.08 14.85ZM-20.78 12L-23.84 13.31L-26.37 19.69L-21.08 15.3ZM-20.78 12L-24.02 11.26L-29.82 14.94L-22.97 14.5ZM-20.78 12L-22.97 9.5L-29.82 9.06L-24.02 12.74ZM-20.78 12L-21.08 8.7L-26.37 4.31L-23.84 10.69ZM-8.59 -3.11L-6.99 -5.89L-13.92 -9.89L-15.52 -7.11ZM-27.28 -12a6.5 6.5 0 1 0 13 0a6.5 6.5 0 1 0 -13 0ZM-20.78 -12L-19.08 -14.85L-20.78 -21.5L-22.48 -14.85ZM-20.78 -12L-17.73 -13.31L-15.2 -19.69L-20.48 -15.3ZM-20.78 -12L-17.55 -11.26L-11.75 -14.94L-18.6 -14.5ZM-20.78 -12L-18.6 -9.5L-11.75 -9.06L-17.55 -12.74ZM-20.78 -12L-20.48 -8.7L-15.2 -4.31L-17.73 -10.69ZM-20.78 -12L-22.48 -9.15L-20.78 -2.5L-19.08 -9.15ZM-20.78 -12L-23.84 -10.69L-26.37 -4.31L-21.08 -8.7ZM-20.78 -12L-24.02 -12.74L-29.82 -9.06L-22.97 -9.5ZM-20.78 -12L-22.97 -14.5L-29.82 -14.94L-24.02 -11.26ZM-20.78 -12L-21.08 -15.3L-26.37 -19.69L-23.84 -13.31Z"/><circle cx="1074" cy="663.8" r="9.5" fill="none" stroke="#51a0dd" stroke-width="2.6"/><circle cx="1074" cy="663.8" r="6" fill="none" stroke="#51a0dd" stroke-width="1.5"/><path transform="translate(666.9 768.4)" d="M-0.65 0L0.65 0L0.65 -28L-0.65 -28ZM0 -6L1.4 -9L0 -12L-1.4 -9ZM0 -13L1.4 -16L0 -19L-1.4 -16ZM3 -23L0 -38L-3 -23ZM2.38 -25.38L-6.5 -35.26L-2.38 -22.62ZM2.38 -22.62L6.5 -35.26L-2.38 -25.38ZM-0.33 -0.56L0.33 0.56L24.57 -13.44L23.92 -14.56ZM5.2 -3L8.49 -3.29L10.39 -6L7.09 -5.71ZM11.26 -6.5L14.56 -6.79L16.45 -9.5L13.16 -9.21ZM21.42 -8.9L32.91 -19L18.42 -14.1ZM23.17 -10.63L27.28 -23.26L18.4 -13.38ZM20.78 -9.25L33.78 -12L20.78 -14.75ZM0.32 -0.56L-0.32 0.56L23.92 14.56L24.57 13.44ZM5.2 3L7.09 5.71L10.39 6L8.49 3.29ZM11.26 6.5L13.16 9.21L16.45 9.5L14.56 6.79ZM18.42 14.1L32.91 19L21.42 8.9ZM20.78 14.75L33.78 12L20.78 9.25ZM18.4 13.37L27.28 23.26L23.17 10.62ZM0.65 -0L-0.65 0L-0.65 28L0.65 28ZM0 6L-1.4 9L0 12L1.4 9ZM0 13L-1.4 16L0 19L1.4 16ZM-3 23L0 38L3 23ZM-2.38 25.38L6.5 35.26L2.38 22.62ZM-2.38 22.62L-6.5 35.26L2.38 25.38ZM0.33 0.56L-0.33 -0.56L-24.57 13.44L-23.92 14.56ZM-5.2 3L-8.49 3.29L-10.39 6L-7.09 5.71ZM-11.26 6.5L-14.56 6.79L-16.45 9.5L-13.16 9.21ZM-21.42 8.9L-32.91 19L-18.42 14.1ZM-23.17 10.63L-27.28 23.26L-18.4 13.38ZM-20.78 9.25L-33.78 12L-20.78 14.75ZM-0.33 0.56L0.33 -0.56L-23.92 -14.56L-24.57 -13.44ZM-5.2 -3L-7.09 -5.71L-10.39 -6L-8.49 -3.29ZM-11.26 -6.5L-13.16 -9.21L-16.45 -9.5L-14.56 -6.79ZM-18.42 -14.1L-32.91 -19L-21.42 -8.9ZM-20.78 -14.75L-33.78 -12L-20.78 -9.25ZM-18.4 -13.38L-27.28 -23.26L-23.17 -10.63Z"/><path transform="translate(765.3 765.3)" d="M0 0L2 -3.9L0 -13L-2 -3.9ZM0 0L3.23 -1.6L5 -8.66L-0.23 -3.6ZM0 0L4.38 -0.22L11.26 -6.5L2.38 -3.68ZM0 0L3 2L10 -0L3 -2ZM0 0L2.38 3.68L11.26 6.5L4.38 0.22ZM0 0L-0.23 3.6L5 8.66L3.23 1.6ZM0 0L-2 3.9L0 13L2 3.9ZM0 0L-3.23 1.6L-5 8.66L0.23 3.6ZM0 0L-4.38 0.22L-11.26 6.5L-2.38 3.68ZM0 0L-3 -2L-10 0L-3 2ZM0 0L-2.38 -3.68L-11.26 -6.5L-4.38 -0.22ZM0 0L0.23 -3.6L-5 -8.66L-3.23 -1.6ZM-1 -5L1 -5L1 -25L-1 -25ZM2.75 -21L0 -33L-2.75 -21ZM2.17 -23.25L-5 -30.66L-2.17 -20.75ZM2.17 -20.75L5 -30.66L-2.17 -23.25ZM1.15 -15.96L-4.5 -20.36L-1.15 -14.04ZM1.15 -14.04L4.5 -20.36L-1.15 -15.96ZM3.83 -3.37L4.83 -1.63L22.15 -11.63L21.15 -13.37ZM19.56 -8.12L28.58 -16.5L16.81 -12.88ZM21.22 -9.75L24.05 -19.66L16.89 -12.25ZM19.05 -8.5L29.05 -11L19.05 -13.5ZM14.4 -6.99L15.38 -14.08L11.58 -8.01ZM12.73 -6.02L19.88 -6.28L13.25 -8.98ZM4.83 1.63L3.83 3.37L21.15 13.37L22.15 11.63ZM16.81 12.88L28.58 16.5L19.56 8.12ZM19.05 13.5L29.05 11L19.05 8.5ZM16.89 12.25L24.05 19.66L21.22 9.75ZM13.25 8.98L19.88 6.28L12.73 6.02ZM11.58 8.01L15.38 14.08L14.4 6.99ZM1 5L-1 5L-1 25L1 25ZM-2.75 21L0 33L2.75 21ZM-2.17 23.25L5 30.66L2.17 20.75ZM-2.17 20.75L-5 30.66L2.17 23.25ZM-1.15 15.96L4.5 20.36L1.15 14.04ZM-1.15 14.04L-4.5 20.36L1.15 15.96ZM-3.83 3.37L-4.83 1.63L-22.15 11.63L-21.15 13.37ZM-19.56 8.12L-28.58 16.5L-16.81 12.88ZM-21.22 9.75L-24.05 19.66L-16.89 12.25ZM-19.05 8.5L-29.05 11L-19.05 13.5ZM-14.4 6.99L-15.38 14.08L-11.58 8.01ZM-12.73 6.02L-19.88 6.28L-13.25 8.98ZM-4.83 -1.63L-3.83 -3.37L-21.15 -13.37L-22.15 -11.63ZM-16.81 -12.88L-28.58 -16.5L-19.56 -8.12ZM-19.05 -13.5L-29.05 -11L-19.05 -8.5ZM-16.89 -12.25L-24.05 -19.66L-21.22 -9.75ZM-13.25 -8.98L-19.88 -6.28L-12.73 -6.02ZM-11.58 -8.01L-15.38 -14.08L-14.4 -6.99Z"/><path transform="translate(869.5 766.9)" d="M-2.25 0L2.25 0L1.25 -29L-1.25 -29ZM1.75 -28L0 -34L-1.75 -28ZM1.21 -28.7L-2.7 -32.68L-1.21 -27.3ZM1.21 -27.3L2.7 -32.68L-1.21 -28.7ZM1 -9.11L-6.69 -14.02L-1 -6.89ZM1 -6.89L6.69 -14.02L-1 -9.11ZM1 -15.11L-7.43 -20.69L-1 -12.89ZM1 -12.89L7.43 -20.69L-1 -15.11ZM1 -21.11L-6.69 -26.02L-1 -18.89ZM1 -18.89L6.69 -26.02L-1 -21.11ZM1 -26.11L-5.2 -29.68L-1 -23.89ZM1 -23.89L5.2 -29.68L-1 -26.11ZM1.5 -2.6L5.98 -6.36L7 -12.12L2.52 -8.36ZM-1.13 -1.95L1.13 1.95L25.74 -13.42L24.49 -15.58ZM25.12 -12.48L29.44 -17L23.37 -15.52ZM25.46 -13.3L26.95 -18.68L23.04 -14.7ZM24.25 -12.6L29.65 -14L24.25 -15.4ZM8.4 -3.69L8.8 -12.8L5.46 -4.31ZM6.46 -2.57L15.49 -1.22L7.39 -5.43ZM13.59 -6.69L14.2 -16.78L10.66 -7.31ZM11.66 -5.57L21.63 -3.91L12.59 -8.43ZM18.79 -9.69L19.19 -18.8L15.85 -10.31ZM16.86 -8.57L25.88 -7.22L17.78 -11.43ZM23.12 -12.19L23.11 -19.35L20.18 -12.81ZM21.19 -11.07L28.31 -10.34L22.11 -13.93ZM3 -0L8.5 2L14 -0L8.5 -2ZM1.12 -1.95L-1.12 1.95L24.49 15.58L25.74 13.42ZM23.37 15.52L29.44 17L25.12 12.48ZM24.25 15.4L29.65 14L24.25 12.6ZM23.04 14.7L26.95 18.68L25.46 13.3ZM7.39 5.43L15.49 1.22L6.46 2.57ZM5.46 4.31L8.8 12.8L8.4 3.69ZM12.59 8.43L21.63 3.91L11.66 5.57ZM10.66 7.31L14.2 16.78L13.59 6.69ZM17.78 11.43L25.88 7.22L16.86 8.57ZM15.85 10.31L19.19 18.8L18.79 9.69ZM22.11 13.93L28.31 10.34L21.19 11.07ZM20.18 12.81L23.11 19.35L23.12 12.19ZM1.5 2.6L2.52 8.36L7 12.12L5.98 6.36ZM2.25 -0L-2.25 0L-1.25 29L1.25 29ZM-1.75 28L0 34L1.75 28ZM-1.21 28.7L2.7 32.68L1.21 27.3ZM-1.21 27.3L-2.7 32.68L1.21 28.7ZM-1 9.11L6.69 14.02L1 6.89ZM-1 6.89L-6.69 14.02L1 9.11ZM-1 15.11L7.43 20.69L1 12.89ZM-1 12.89L-7.43 20.69L1 15.11ZM-1 21.11L6.69 26.02L1 18.89ZM-1 18.89L-6.69 26.02L1 21.11ZM-1 26.11L5.2 29.68L1 23.89ZM-1 23.89L-5.2 29.68L1 26.11ZM-1.5 2.6L-5.98 6.36L-7 12.12L-2.52 8.36ZM1.13 1.95L-1.13 -1.95L-25.74 13.42L-24.49 15.58ZM-25.12 12.48L-29.44 17L-23.37 15.52ZM-25.46 13.3L-26.95 18.68L-23.04 14.7ZM-24.25 12.6L-29.65 14L-24.25 15.4ZM-8.4 3.69L-8.8 12.8L-5.46 4.31ZM-6.46 2.57L-15.49 1.22L-7.39 5.43ZM-13.59 6.69L-14.2 16.78L-10.66 7.31ZM-11.66 5.57L-21.63 3.91L-12.59 8.43ZM-18.79 9.69L-19.19 18.8L-15.85 10.31ZM-16.86 8.57L-25.88 7.22L-17.78 11.43ZM-23.12 12.19L-23.11 19.35L-20.18 12.81ZM-21.19 11.07L-28.31 10.34L-22.11 13.93ZM-3 0L-8.5 -2L-14 0L-8.5 2ZM-1.13 1.95L1.13 -1.95L-24.49 -15.58L-25.74 -13.42ZM-23.37 -15.52L-29.44 -17L-25.12 -12.48ZM-24.25 -15.4L-29.65 -14L-24.25 -12.6ZM-23.04 -14.7L-26.95 -18.68L-25.46 -13.3ZM-7.39 -5.43L-15.49 -1.22L-6.46 -2.57ZM-5.46 -4.31L-8.8 -12.8L-8.4 -3.69ZM-12.59 -8.43L-21.63 -3.91L-11.66 -5.57ZM-10.66 -7.31L-14.2 -16.78L-13.59 -6.69ZM-17.78 -11.43L-25.88 -7.22L-16.86 -8.57ZM-15.85 -10.31L-19.19 -18.8L-18.79 -9.69ZM-22.11 -13.93L-28.31 -10.34L-21.19 -11.07ZM-20.18 -12.81L-23.11 -19.35L-23.12 -12.19ZM-1.5 -2.6L-2.52 -8.36L-7 -12.12L-5.98 -6.36ZM-6 0a6 6 0 1 0 12 0a6 6 0 1 0 -12 0Z"/><path transform="translate(974.5 766.9)" d="M-10 0a10 10 0 1 0 20 0a10 10 0 1 0 -20 0ZM-1.5 -8L1.5 -8L1.25 -23L-1.25 -23ZM2.7 -7.68L5.3 -6.18L12.58 -19.29L10.42 -20.54ZM6.18 -5.3L7.68 -2.7L20.54 -10.42L19.29 -12.58ZM8 -1.5L8 1.5L23 1.25L23 -1.25ZM7.68 2.7L6.18 5.3L19.29 12.58L20.54 10.42ZM5.3 6.18L2.7 7.68L10.42 20.54L12.58 19.29ZM1.5 8L-1.5 8L-1.25 23L1.25 23ZM-2.7 7.68L-5.3 6.18L-12.58 19.29L-10.42 20.54ZM-6.18 5.3L-7.68 2.7L-20.54 10.42L-19.29 12.58ZM-8 1.5L-8 -1.5L-23 -1.25L-23 1.25ZM-7.68 -2.7L-6.18 -5.3L-19.29 -12.58L-20.54 -10.42ZM-5.3 -6.18L-2.7 -7.68L-10.42 -20.54L-12.58 -19.29ZM-2.29 -10.76L-1.99 -18.9L1.99 -18.9L2.29 -10.76L3.09 -9.51L3.29 -20.74L-3.29 -20.74L-3.09 -9.51ZM8.17 -7.36L15.37 -11.17L17.36 -7.73L10.46 -3.4L9.78 -2.08L19.61 -7.53L16.32 -13.22L6.69 -7.43ZM10.46 3.4L17.36 7.73L15.37 11.17L8.17 7.36L6.69 7.43L16.32 13.22L19.61 7.53L9.78 2.08ZM2.29 10.76L1.99 18.9L-1.99 18.9L-2.29 10.76L-3.09 9.51L-3.29 20.74L3.29 20.74L3.09 9.51ZM-8.17 7.36L-15.37 11.17L-17.36 7.73L-10.46 3.4L-9.78 2.08L-19.61 7.53L-16.32 13.22L-6.69 7.43ZM-10.46 -3.4L-17.36 -7.73L-15.37 -11.17L-8.17 -7.36L-6.69 -7.43L-16.32 -13.22L-19.61 -7.53L-9.78 -2.08ZM-3.2 -25a3.2 3.2 0 1 0 6.4 0a3.2 3.2 0 1 0 -6.4 0ZM5.35 -23.49a3.2 3.2 0 1 0 6.4 0a3.2 3.2 0 1 0 -6.4 0ZM12.87 -19.15a3.2 3.2 0 1 0 6.4 0a3.2 3.2 0 1 0 -6.4 0ZM18.45 -12.5a3.2 3.2 0 1 0 6.4 0a3.2 3.2 0 1 0 -6.4 0ZM21.42 -4.34a3.2 3.2 0 1 0 6.4 0a3.2 3.2 0 1 0 -6.4 0ZM21.42 4.34a3.2 3.2 0 1 0 6.4 0a3.2 3.2 0 1 0 -6.4 0ZM18.45 12.5a3.2 3.2 0 1 0 6.4 0a3.2 3.2 0 1 0 -6.4 0ZM12.87 19.15a3.2 3.2 0 1 0 6.4 0a3.2 3.2 0 1 0 -6.4 0ZM5.35 23.49a3.2 3.2 0 1 0 6.4 0a3.2 3.2 0 1 0 -6.4 0ZM-3.2 25a3.2 3.2 0 1 0 6.4 0a3.2 3.2 0 1 0 -6.4 0ZM-11.75 23.49a3.2 3.2 0 1 0 6.4 0a3.2 3.2 0 1 0 -6.4 0ZM-19.27 19.15a3.2 3.2 0 1 0 6.4 0a3.2 3.2 0 1 0 -6.4 0ZM-24.85 12.5a3.2 3.2 0 1 0 6.4 0a3.2 3.2 0 1 0 -6.4 0ZM-27.82 4.34a3.2 3.2 0 1 0 6.4 0a3.2 3.2 0 1 0 -6.4 0ZM-27.82 -4.34a3.2 3.2 0 1 0 6.4 0a3.2 3.2 0 1 0 -6.4 0ZM-24.85 -12.5a3.2 3.2 0 1 0 6.4 0a3.2 3.2 0 1 0 -6.4 0ZM-19.27 -19.15a3.2 3.2 0 1 0 6.4 0a3.2 3.2 0 1 0 -6.4 0ZM-11.75 -23.49a3.2 3.2 0 1 0 6.4 0a3.2 3.2 0 1 0 -6.4 0ZM2.42 -18.35a2.5 2.5 0 1 0 5 0a2.5 2.5 0 1 0 -5 0ZM10.94 -13.44a2.5 2.5 0 1 0 5 0a2.5 2.5 0 1 0 -5 0ZM15.85 -4.92a2.5 2.5 0 1 0 5 0a2.5 2.5 0 1 0 -5 0ZM15.85 4.92a2.5 2.5 0 1 0 5 0a2.5 2.5 0 1 0 -5 0ZM10.94 13.44a2.5 2.5 0 1 0 5 0a2.5 2.5 0 1 0 -5 0ZM2.42 18.35a2.5 2.5 0 1 0 5 0a2.5 2.5 0 1 0 -5 0ZM-7.42 18.35a2.5 2.5 0 1 0 5 0a2.5 2.5 0 1 0 -5 0ZM-15.94 13.44a2.5 2.5 0 1 0 5 0a2.5 2.5 0 1 0 -5 0ZM-20.85 4.92a2.5 2.5 0 1 0 5 0a2.5 2.5 0 1 0 -5 0ZM-20.85 -4.92a2.5 2.5 0 1 0 5 0a2.5 2.5 0 1 0 -5 0ZM-15.94 -13.44a2.5 2.5 0 1 0 5 0a2.5 2.5 0 1 0 -5 0ZM-7.42 -18.35a2.5 2.5 0 1 0 5 0a2.5 2.5 0 1 0 -5 0ZM1.5 -28L0 -33L-1.5 -28ZM0.92 -28.77L-2.57 -31.06L-0.92 -27.23ZM0.92 -27.23L2.57 -31.06L-0.92 -28.77ZM25 -12.7L28.58 -16.5L23.5 -15.3ZM25.38 -13.59L25.62 -17.76L23.12 -14.41ZM24.04 -12.82L28.19 -13.31L24.46 -15.18ZM23.5 15.3L28.58 16.5L25 12.7ZM24.46 15.18L28.19 13.31L24.04 12.82ZM23.12 14.41L25.62 17.76L25.38 13.59ZM-1.5 28L0 33L1.5 28ZM-0.92 28.77L2.57 31.06L0.92 27.23ZM-0.92 27.23L-2.57 31.06L0.92 28.77ZM-25 12.7L-28.58 16.5L-23.5 15.3ZM-25.38 13.59L-25.62 17.76L-23.12 14.41ZM-24.04 12.82L-28.19 13.31L-24.46 15.18ZM-23.5 -15.3L-28.58 -16.5L-25 -12.7ZM-24.46 -15.18L-28.19 -13.31L-24.04 -12.82ZM-23.12 -14.41L-25.62 -17.76L-25.38 -13.59Z"/><path transform="translate(1074 768.4)" d="M0 -7L2.25 -14.25L0 -36L-2.25 -14.25ZM0.89 -6.01a1.6 1.6 0 1 0 3.2 0a1.6 1.6 0 1 0 -3.2 0ZM4.95 -4.95L11.67 -8.49L25.46 -25.46L8.49 -11.67ZM4.41 -2.49a1.6 1.6 0 1 0 3.2 0a1.6 1.6 0 1 0 -3.2 0ZM7 -0L14.25 2.25L36 -0L14.25 -2.25ZM4.41 2.49a1.6 1.6 0 1 0 3.2 0a1.6 1.6 0 1 0 -3.2 0ZM4.95 4.95L8.49 11.67L25.46 25.46L11.67 8.49ZM0.89 6.01a1.6 1.6 0 1 0 3.2 0a1.6 1.6 0 1 0 -3.2 0ZM0 7L-2.25 14.25L0 36L2.25 14.25ZM-4.09 6.01a1.6 1.6 0 1 0 3.2 0a1.6 1.6 0 1 0 -3.2 0ZM-4.95 4.95L-11.67 8.49L-25.46 25.46L-8.49 11.67ZM-7.61 2.49a1.6 1.6 0 1 0 3.2 0a1.6 1.6 0 1 0 -3.2 0ZM-7 0L-14.25 -2.25L-36 0L-14.25 2.25ZM-7.61 -2.49a1.6 1.6 0 1 0 3.2 0a1.6 1.6 0 1 0 -3.2 0ZM-4.95 -4.95L-8.49 -11.67L-25.46 -25.46L-11.67 -8.49ZM-4.09 -6.01a1.6 1.6 0 1 0 3.2 0a1.6 1.6 0 1 0 -3.2 0ZM-2 0a2 2 0 1 0 4 0a2 2 0 1 0 -4 0Z"/><circle cx="1074" cy="768.4" r="5" fill="none" stroke="#51a0dd" stroke-width="1.8"/></g></svg>
<div class="a" style="left:1645px;top:85px;width:16px;height:938px;background:#363636;"></div>
<svg class="a" style="left:1649px;top:91px;" width="9" height="6" viewBox="0 0 9 6"><path d="M0 6L4.5 0L9 6Z" fill="#e0e0e0"/></svg>
<svg class="a" style="left:1649px;top:1011px;" width="9" height="6" viewBox="0 0 9 6"><path d="M0 0H9L4.5 6Z" fill="#e0e0e0"/></svg>
<div class="a" style="left:1646px;top:545px;width:15px;height:15px;background:#a6a6a6;"></div>
<div class="a" style="left:1661px;top:65px;width:3px;height:976px;background:#2b2b2b;"></div>
<div class="a" style="left:42px;top:1023px;width:1619px;height:1px;background:#2a2a2a;"></div>
<div class="a" style="left:42px;top:1024px;width:1603px;height:15px;background:#484848;"></div>
<div class="a" style="left:1645px;top:1023px;width:16px;height:16px;background:#4a4a4a;"></div>
<div class="a" style="left:0px;top:1039px;width:1661px;height:2px;background:#1d232b;"></div>
<svg class="a" style="left:48px;top:1026px;" width="20" height="12" viewBox="0 0 20 12"><circle cx="5" cy="6" r="4" fill="#6a6a6a" stroke="#5a5a5a"/><path d="M10 4H16L14 2M18 8H12L14 10" stroke="#6a6a6a" stroke-width="1.5" fill="none"/></svg>
<svg class="a" style="left:78px;top:1025px;" width="15" height="13" viewBox="0 0 15 13"><path d="M1 5V12H11V9" stroke="#e0e0e0" stroke-width="1.5" fill="none"/><path d="M4 9C5 5 8 4 10 4V1.5L14 5L10 8.5V6C8 6 6 7 4 9Z" fill="#e0e0e0"/></svg>
<div class="a" style="left:104px;top:1025px;width:41px;height:15px;background:#bcbcbc;border:1px solid #333;"></div>
<div class="t" style="left:107.0px;top:1027.69px;font-size:11px;line-height:11px;font-weight:400;color:#151515;transform:scaleX(0.8173);">100%</div>
<div class="a" style="left:145px;top:1025px;width:15px;height:15px;background:linear-gradient(#575757,#4a4a4a);border:1px solid #2e2e2e;"></div>
<svg class="a" style="left:149.0px;top:1030.5px;" width="7" height="4" viewBox="0 0 7 4"><path d="M0 0H7L3.5 4Z" fill="#d8d8d8"/></svg>
<svg class="a" style="left:169px;top:1026px;" width="10" height="11" viewBox="0 0 10 11"><path d="M1 1V10" stroke="#6b6b6b" stroke-width="2"/><path d="M9 1V10L3 5.5Z" fill="#6b6b6b"/></svg>
<svg class="a" style="left:189px;top:1026px;" width="7" height="11" viewBox="0 0 7 11"><path d="M6 1V10L0 5.5Z" fill="#6b6b6b"/></svg>
<div class="a" style="left:204px;top:1025px;width:42px;height:15px;background:#bcbcbc;border:1px solid #333;"></div>
<div class="t" style="left:207.0px;top:1027.69px;font-size:11px;line-height:11px;font-weight:400;color:#151515;transform:scaleX(0.6531);">1</div>
<div class="a" style="left:246px;top:1025px;width:15px;height:15px;background:linear-gradient(#575757,#4a4a4a);border:1px solid #2e2e2e;"></div>
<svg class="a" style="left:250.0px;top:1030.5px;" width="7" height="4" viewBox="0 0 7 4"><path d="M0 0H7L3.5 4Z" fill="#d8d8d8"/></svg>
<svg class="a" style="left:270px;top:1026px;" width="7" height="11" viewBox="0 0 7 11"><path d="M0 1V10L6 5.5Z" fill="#6b6b6b"/></svg>
<svg class="a" style="left:286px;top:1026px;" width="10" height="11" viewBox="0 0 10 11"><path d="M9 1V10" stroke="#6b6b6b" stroke-width="2"/><path d="M0 1V10L6 5.5Z" fill="#6b6b6b"/></svg>
<div class="a" style="left:302px;top:1023px;width:1px;height:16px;background:#363636;"></div>
<div class="a" style="left:303px;top:1023px;width:1px;height:16px;background:#5a5a5a;"></div>
<div class="t" style="left:384.0px;top:1024.69px;font-size:11px;line-height:11px;font-weight:400;color:#e0e0e0;transform:scaleX(0.9043);">Auswahl</div>
<div class="a" style="left:502px;top:1023px;width:1px;height:16px;background:#363636;"></div>
<div class="a" style="left:503px;top:1023px;width:1px;height:16px;background:#5a5a5a;"></div>
<svg class="a" style="left:510px;top:1027px;" width="7" height="10" viewBox="0 0 7 10"><path d="M0 0V10L6 5Z" fill="#d8d8d8"/></svg>
<div class="a" style="left:521px;top:1023px;width:1124px;height:16px;background:#363636;"></div>
<svg class="a" style="left:526px;top:1027px;" width="7" height="10" viewBox="0 0 7 10"><path d="M6 0V10L0 5Z" fill="#e8e8e8"/></svg>
<div class="a" style="left:1073px;top:1024px;width:16px;height:15px;background:#a6a6a6;"></div>
<svg class="a" style="left:1633px;top:1027px;" width="7" height="10" viewBox="0 0 7 10"><path d="M0 0V10L6 5Z" fill="#e8e8e8"/></svg>
<div class="a" style="left:1664px;top:65px;width:256px;height:976px;background:#4a4a4a;"></div>
<div class="a" style="left:1664px;top:65px;width:256px;height:12px;background:#393939;"></div>
<svg class="a" style="left:1907px;top:68px;" width="8" height="5" viewBox="0 0 8 5"><path d="M0 0L3.5 2.5L0 5ZM4 0L7.5 2.5L4 5Z" fill="#cfcfcf"/></svg>
<div class="a" style="left:1918px;top:65px;width:2px;height:976px;background:#2f2f2f;"></div>
<div class="a" style="left:1664px;top:77px;width:254px;height:17px;background:#383838;"></div>
<div class="a" style="left:1664px;top:94px;width:254px;height:1px;background:#3e3e3e;"></div>
<div class="a" style="left:1664px;top:77px;width:62px;height:18px;background:#4a4a4a;"></div>
<svg class="a" style="left:1669px;top:81px;" width="6" height="10" viewBox="0 0 6 10"><path d="M0.5 4L3 1L5.5 4M0.5 6L3 9L5.5 6" stroke="#e0e0e0" fill="none" stroke-width="1.1"/></svg>
<div class="t" style="left:1677.0px;top:79.69px;font-size:11px;line-height:11px;font-weight:700;color:#e6e6e6;transform:scaleX(0.9041);">Farbhilfe</div>
<div class="a" style="left:1726px;top:77px;width:40px;height:17px;background:#3d3d3d;"></div>
<div class="a" style="left:1765px;top:77px;width:1px;height:17px;background:#303030;"></div>
<div class="t" style="left:1733.0px;top:79.69px;font-size:11px;line-height:11px;font-weight:700;color:#a0a0a0;transform:scaleX(0.8889);">Kuler</div>
<svg class="a" style="left:1901px;top:81px;" width="15" height="8" viewBox="0 0 15 8"><path d="M0 2H5L2.5 5Z" fill="#cfcfcf"/><path d="M6 0.5H15M6 2.5H15M6 4.5H15M6 6.5H15" stroke="#cfcfcf" stroke-width="1"/></svg>
<div class="a" style="left:1670px;top:102px;width:20px;height:20px;background:#ffffff;border:2px solid #000;outline:1px solid #fff;"></div>
<div class="a" style="left:1697px;top:102px;width:200px;height:22px;background:#e2e2e2;border:1px solid #3a3a3a;"></div>
<div class="a" style="left:1699px;top:104px;width:82px;height:18px;background:#000;"></div>
<div class="a" style="left:1700px;top:105px;width:16px;height:16px;background:#ffffff;border:1px solid #000;outline:1px solid #fff;outline-offset:-3px;"></div>
<div class="a" style="left:1716px;top:105px;width:32px;height:16px;background:linear-gradient(90deg,#b2a29f,#bab3a6);"></div>
<div class="a" style="left:1748px;top:105px;width:16px;height:16px;background:#c5f6c9;"></div>
<div class="a" style="left:1764px;top:105px;width:16px;height:16px;background:#9089b6;"></div>
<div class="a" style="left:1897px;top:102px;width:16px;height:22px;background:linear-gradient(#575757,#4a4a4a);border:1px solid #2e2e2e;"></div>
<svg class="a" style="left:1901.5px;top:111.0px;" width="7" height="4" viewBox="0 0 7 4"><path d="M0 0H7L3.5 4Z" fill="#d8d8d8"/></svg>
<div class="t" style="left:1687.0px;top:131.69px;font-size:11px;line-height:11px;font-weight:700;color:#e6e6e6;transform:scaleX(0.9241);">Schattierungen</div>
<svg class="a" style="left:1788.0px;top:136.5px;" width="7" height="4" viewBox="0 0 7 4"><path d="M0 0H7L3.5 4Z" fill="#d8d8d8"/></svg>
<div class="t" style="left:1849.0px;top:131.69px;font-size:11px;line-height:11px;font-weight:700;color:#e6e6e6;transform:scaleX(0.9349);">Farbtöne</div>
<div class="a" style="left:1669px;top:150px;width:245px;height:115px;background:#494949;border:1px solid #2c2c2c;"></div>
<div class="a" style="left:1670px;top:151px;width:243px;height:75px;background:#111;"></div>
<div class="a" style="left:1698px;top:151px;width:26px;height:15px;background:#3c3c3c;"></div>
<div class="a" style="left:1725px;top:151px;width:26px;height:15px;background:#7d7d7d;"></div>
<div class="a" style="left:1752px;top:151px;width:26px;height:15px;background:#c0c0c0;"></div>
<div class="a" style="left:1779px;top:151px;width:26px;height:15px;background:#fff;"></div>
<div class="a" style="left:1806px;top:151px;width:27px;height:15px;background:#fff;"></div>
<div class="a" style="left:1834px;top:151px;width:27px;height:15px;background:#fff;"></div>
<div class="a" style="left:1862px;top:151px;width:26px;height:15px;background:#fff;"></div>
<div class="a" style="left:1889px;top:151px;width:24px;height:15px;background:#fff;"></div>
<div class="a" style="left:1698px;top:167px;width:26px;height:14px;background:#2f2a29;"></div>
<div class="a" style="left:1725px;top:167px;width:26px;height:14px;background:#594f4e;"></div>
<div class="a" style="left:1752px;top:167px;width:26px;height:14px;background:#8e7f7d;"></div>
<div class="a" style="left:1779px;top:167px;width:26px;height:14px;background:#b5a3a0;"></div>
<div class="a" style="left:1806px;top:167px;width:27px;height:14px;background:#c4b4b2;"></div>
<div class="a" style="left:1834px;top:167px;width:27px;height:14px;background:#d4c8c6;"></div>
<div class="a" style="left:1862px;top:167px;width:26px;height:14px;background:#ddd5d3;"></div>
<div class="a" style="left:1889px;top:167px;width:24px;height:14px;background:#ece6e5;"></div>
<div class="a" style="left:1698px;top:182px;width:26px;height:14px;background:#2f2d2b;"></div>
<div class="a" style="left:1725px;top:182px;width:26px;height:14px;background:#5a5650;"></div>
<div class="a" style="left:1752px;top:182px;width:26px;height:14px;background:#8c877c;"></div>
<div class="a" style="left:1779px;top:182px;width:26px;height:14px;background:#b7b2a5;"></div>
<div class="a" style="left:1806px;top:182px;width:27px;height:14px;background:#c6c1b5;"></div>
<div class="a" style="left:1834px;top:182px;width:27px;height:14px;background:#d3cfc6;"></div>
<div class="a" style="left:1862px;top:182px;width:26px;height:14px;background:#e0ded7;"></div>
<div class="a" style="left:1889px;top:182px;width:24px;height:14px;background:#eeede9;"></div>
<div class="a" style="left:1698px;top:197px;width:26px;height:14px;background:#2e3f32;"></div>
<div class="a" style="left:1725px;top:197px;width:26px;height:14px;background:#5c8870;"></div>
<div class="a" style="left:1752px;top:197px;width:26px;height:14px;background:#99c3a4;"></div>
<div class="a" style="left:1779px;top:197px;width:26px;height:14px;background:#c4f7cd;"></div>
<div class="a" style="left:1806px;top:197px;width:27px;height:14px;background:#c8f8d0;"></div>
<div class="a" style="left:1834px;top:197px;width:27px;height:14px;background:#d8fbdf;"></div>
<div class="a" style="left:1862px;top:197px;width:26px;height:14px;background:#eafdec;"></div>
<div class="a" style="left:1889px;top:197px;width:24px;height:14px;background:#f5fff6;"></div>
<div class="a" style="left:1698px;top:212px;width:26px;height:14px;background:#2a2a33;"></div>
<div class="a" style="left:1725px;top:212px;width:26px;height:14px;background:#48475d;"></div>
<div class="a" style="left:1752px;top:212px;width:26px;height:14px;background:#6c6b89;"></div>
<div class="a" style="left:1779px;top:212px;width:26px;height:14px;background:#908fb2;"></div>
<div class="a" style="left:1806px;top:212px;width:27px;height:14px;background:#a19fc2;"></div>
<div class="a" style="left:1834px;top:212px;width:27px;height:14px;background:#c2c1d8;"></div>
<div class="a" style="left:1862px;top:212px;width:26px;height:14px;background:#d9d8e6;"></div>
<div class="a" style="left:1889px;top:212px;width:24px;height:14px;background:#eaeaf0;"></div>
<div class="a" style="left:1670px;top:151px;width:27px;height:75px;background:#000;"></div>
<svg class="a" style="left:1674px;top:269px;" width="20" height="13" viewBox="0 0 20 13"><rect x="0.5" y="0.5" width="14" height="9" fill="#8a8a8a" stroke="#bdbdbd"/><path d="M5 0V10M10 0V10M0 5H15" stroke="#555"/><path d="M15 10H20L17.5 12.5Z" fill="#cfcfcf"/></svg>
<div class="t" style="left:1701.0px;top:267.69px;font-size:11px;line-height:11px;font-weight:400;color:#dedede;transform:scaleX(0.8915);">Ohne</div>
<svg class="a" style="left:1853px;top:268px;" width="13" height="13" viewBox="0 0 13 13"><circle cx="6.5" cy="6.5" r="5.5" fill="#777" stroke="#aaa"/><circle cx="6.5" cy="6.5" r="2" fill="#444"/></svg>
<svg class="a" style="left:1877px;top:268px;" width="18" height="12" viewBox="0 0 18 12"><rect x="6" y="1" width="11" height="10" fill="#9a9a9a" stroke="#cfcfcf"/><path d="M3.5 4V11M0 7.5H7" stroke="#e0e0e0" stroke-width="2"/></svg>
<svg class="a" style="left:1908px;top:276px;" width="8" height="8" viewBox="0 0 8 8"><rect x="6" y="0" width="1" height="1" fill="#222"/><rect x="4" y="2" width="1" height="1" fill="#222"/><rect x="6" y="2" width="1" height="1" fill="#222"/><rect x="2" y="4" width="1" height="1" fill="#222"/><rect x="4" y="4" width="1" height="1" fill="#222"/><rect x="6" y="4" width="1" height="1" fill="#222"/><rect x="0" y="6" width="1" height="1" fill="#222"/><rect x="2" y="6" width="1" height="1" fill="#222"/><rect x="4" y="6" width="1" height="1" fill="#222"/><rect x="6" y="6" width="1" height="1" fill="#222"/></svg>
<div class="a" style="left:1664px;top:284px;width:254px;height:3px;background:#2e2e2e;"></div>
<div class="a" style="left:1664px;top:287px;width:254px;height:17px;background:#383838;"></div>
<div class="a" style="left:1664px;top:304px;width:254px;height:1px;background:#3e3e3e;"></div>
<div class="a" style="left:1664px;top:287px;width:62px;height:18px;background:#4a4a4a;"></div>
<div class="t" style="left:1671.5px;top:289.69px;font-size:11px;line-height:11px;font-weight:700;color:#e6e6e6;transform:scaleX(0.8644);">Farbfelder</div>
<div class="a" style="left:1726px;top:287px;width:56px;height:17px;background:#3d3d3d;"></div>
<div class="a" style="left:1781px;top:287px;width:1px;height:17px;background:#303030;"></div>
<div class="t" style="left:1733.0px;top:289.69px;font-size:11px;line-height:11px;font-weight:700;color:#a0a0a0;transform:scaleX(0.8722);">Symbole</div>
<svg class="a" style="left:1901px;top:291px;" width="15" height="8" viewBox="0 0 15 8"><path d="M0 2H5L2.5 5Z" fill="#cfcfcf"/><path d="M6 0.5H15M6 2.5H15M6 4.5H15M6 6.5H15" stroke="#cfcfcf" stroke-width="1"/></svg>
<div class="a" style="left:1669px;top:307px;width:245px;height:167px;background:#494949;border:1px solid #2c2c2c;"></div>
<div class="a" style="left:1902px;top:308px;width:11px;height:165px;background:#3f3f3f;"></div>
<svg class="a" style="left:1903px;top:315px;" width="9" height="5" viewBox="0 0 9 5"><path d="M0 5L4.5 0L9 5Z" fill="#6a6a6a"/></svg>
<svg class="a" style="left:1903px;top:464px;" width="9" height="5" viewBox="0 0 9 5"><path d="M0 0H9L4.5 5Z" fill="#6a6a6a"/></svg>
<svg class="a" style="left:1670px;top:311px;" width="13" height="13" viewBox="0 0 13 13"><rect width="13" height="13" fill="#fff"/><path d="M1 12L12 1" stroke="#e0101a" stroke-width="1.8"/></svg>
<svg class="a" style="left:1684px;top:311px;" width="13" height="13" viewBox="0 0 13 13"><rect width="13" height="13" fill="#fff"/><circle cx="6.5" cy="6.5" r="4" fill="none" stroke="#222"/><circle cx="6.5" cy="6.5" r="1.3" fill="none" stroke="#222"/><path d="M6.5 0V13M0 6.5H13" stroke="#222"/></svg>
<svg class="a" style="left:1698px;top:311px;" width="13" height="13" viewBox="0 0 13 13"><rect width="13" height="13" fill="#fff"/><rect x="2" y="2" width="9" height="9" fill="#fff" stroke="#000" stroke-width="1.5"/></svg>
<div class="a" style="left:1712px;top:311px;width:13px;height:13px;background:#231816;"></div>
<div class="a" style="left:1726px;top:311px;width:13px;height:13px;background:#e50a1a;"></div>
<div class="a" style="left:1740px;top:311px;width:13px;height:13px;background:#fff000;"></div>
<div class="a" style="left:1754px;top:311px;width:13px;height:13px;background:#35a13e;"></div>
<div class="a" style="left:1768px;top:311px;width:13px;height:13px;background:#3f9fe8;"></div>
<div class="a" style="left:1782px;top:311px;width:13px;height:13px;background:#1f2488;"></div>
<div class="a" style="left:1796px;top:311px;width:13px;height:13px;background:#e4007f;"></div>
<div class="a" style="left:1810px;top:311px;width:13px;height:13px;background:#cc1530;"></div>
<div class="a" style="left:1824px;top:311px;width:13px;height:13px;background:#e2452a;"></div>
<div class="a" style="left:1838px;top:311px;width:13px;height:13px;background:#e7601a;"></div>
<div class="a" style="left:1852px;top:311px;width:13px;height:13px;background:#ee9a10;"></div>
<div class="a" style="left:1866px;top:311px;width:13px;height:13px;background:#f2b23a;"></div>
<div class="a" style="left:1880px;top:311px;width:13px;height:13px;background:#f9e71a;"></div>
<div class="a" style="left:1670px;top:325px;width:13px;height:13px;background:#dce600;"></div>
<div class="a" style="left:1684px;top:325px;width:13px;height:13px;background:#a3c614;"></div>
<div class="a" style="left:1698px;top:325px;width:13px;height:13px;background:#40ad3c;"></div>
<div class="a" style="left:1712px;top:325px;width:13px;height:13px;background:#2e9c43;"></div>
<div class="a" style="left:1726px;top:325px;width:13px;height:13px;background:#25703b;"></div>
<div class="a" style="left:1740px;top:325px;width:13px;height:13px;background:#3fb674;"></div>
<div class="a" style="left:1754px;top:325px;width:13px;height:13px;background:#30a7a2;"></div>
<div class="a" style="left:1768px;top:325px;width:13px;height:13px;background:#48a8e0;"></div>
<div class="a" style="left:1782px;top:325px;width:13px;height:13px;background:#2f73c2;"></div>
<div class="a" style="left:1796px;top:325px;width:13px;height:13px;background:#1f2c8c;"></div>
<div class="a" style="left:1810px;top:325px;width:13px;height:13px;background:#1b1f6e;"></div>
<div class="a" style="left:1824px;top:325px;width:13px;height:13px;background:#5a2789;"></div>
<div class="a" style="left:1838px;top:325px;width:13px;height:13px;background:#8b1a8c;"></div>
<div class="a" style="left:1852px;top:325px;width:13px;height:13px;background:#9d0a6e;"></div>
<div class="a" style="left:1866px;top:325px;width:13px;height:13px;background:#d6045a;"></div>
<div class="a" style="left:1880px;top:325px;width:13px;height:13px;background:#e3127f;"></div>
<div class="a" style="left:1670px;top:339px;width:13px;height:13px;background:#d1c2a4;"></div>
<div class="a" style="left:1684px;top:339px;width:13px;height:13px;background:#a99a85;"></div>
<div class="a" style="left:1698px;top:339px;width:13px;height:13px;background:#8a7564;"></div>
<div class="a" style="left:1712px;top:339px;width:13px;height:13px;background:#6b5948;"></div>
<div class="a" style="left:1726px;top:339px;width:13px;height:13px;background:#c9a56a;"></div>
<div class="a" style="left:1740px;top:339px;width:13px;height:13px;background:#b98c50;"></div>
<div class="a" style="left:1754px;top:339px;width:13px;height:13px;background:#a8703e;"></div>
<div class="a" style="left:1768px;top:339px;width:13px;height:13px;background:#956030;"></div>
<div class="a" style="left:1782px;top:339px;width:13px;height:13px;background:#7a4a18;"></div>
<div class="a" style="left:1796px;top:339px;width:13px;height:13px;background:#43291a;"></div>
<div class="a" style="left:1810px;top:339px;width:13px;height:13px;background:linear-gradient(90deg,#fff,#000);"></div>
<div class="a" style="left:1824px;top:339px;width:13px;height:13px;background:linear-gradient(90deg,#fff200,#e8600a);"></div>
<div class="a" style="left:1838px;top:339px;width:13px;height:13px;background:#4a8ad4;"></div>
<div class="a" style="left:1852px;top:339px;width:13px;height:13px;background:#1d1513;"></div>
<svg class="a" style="left:1866px;top:339px;" width="13" height="13" viewBox="0 0 13 13"><rect width="13" height="13" fill="#d9efc0"/><path d="M2 3C5 1 8 6 11 3M1 9C4 7 8 12 12 8" stroke="#58a838" stroke-width="2.5" fill="none"/></svg>
<svg class="a" style="left:1880px;top:339px;" width="13" height="13" viewBox="0 0 13 13"><rect width="13" height="13" fill="#e9dcc0"/><circle cx="3" cy="3" r="1.8" fill="#9a6a3a"/><circle cx="9" cy="4" r="1.8" fill="#9a6a3a"/><circle cx="4" cy="9" r="1.8" fill="#9a6a3a"/><circle cx="10" cy="10" r="1.8" fill="#9a6a3a"/></svg>
<div class="a" style="left:1670px;top:353px;width:13px;height:13px;background:#2a1f1a;"></div>
<div class="a" style="left:1684px;top:353px;width:13px;height:13px;background:#454141;"></div>
<div class="a" style="left:1698px;top:353px;width:13px;height:13px;background:linear-gradient(90deg,#5a5a5a,#666);"></div>
<div class="a" style="left:1712px;top:353px;width:13px;height:13px;background:#6c6c6c;"></div>
<div class="a" style="left:1726px;top:353px;width:13px;height:13px;background:#8d8d8d;"></div>
<div class="a" style="left:1740px;top:353px;width:13px;height:13px;background:#a2a2a2;"></div>
<div class="a" style="left:1754px;top:353px;width:13px;height:13px;background:#b7b7b7;"></div>
<div class="a" style="left:1768px;top:353px;width:13px;height:13px;background:#cfcfcf;"></div>
<div class="a" style="left:1782px;top:353px;width:13px;height:13px;background:#e0e0e0;"></div>
<div class="a" style="left:1796px;top:353px;width:13px;height:13px;background:#eeeeee;"></div>
<div class="a" style="left:1810px;top:353px;width:13px;height:13px;background:#f4f4f4;"></div>
<div class="a" style="left:1824px;top:353px;width:13px;height:13px;background:#e2101c;"></div>
<div class="a" style="left:1838px;top:353px;width:13px;height:13px;background:#e66b10;"></div>
<div class="a" style="left:1852px;top:353px;width:13px;height:13px;background:#f7d400;"></div>
<div class="a" style="left:1866px;top:353px;width:13px;height:13px;background:#34a045;"></div>
<div class="a" style="left:1880px;top:353px;width:13px;height:13px;background:#1c2f8e;"></div>
<div class="a" style="left:1670px;top:367px;width:13px;height:13px;background:#7b2b9c;"></div>
<svg class="a" style="left:1673px;top:479px;" width="18" height="12" viewBox="0 0 18 12"><path d="M1 1V10M4 1V10M7 1L10 10" stroke="#d0d0d0" stroke-width="1.8"/><path d="M12 9H18L15 12Z" fill="#cfcfcf"/></svg>
<svg class="a" style="left:1702px;top:479px;" width="11" height="11" viewBox="0 0 11 11"><circle cx="3" cy="5.5" r="2" fill="none" stroke="#ccc" stroke-width="1.4"/><path d="M4.5 4L9 1M4.5 7L9 10" stroke="#ccc" stroke-width="1.4"/></svg>
<svg class="a" style="left:1774px;top:479px;" width="18" height="12" viewBox="0 0 18 12"><rect x="0.5" y="0.5" width="10" height="10" fill="#888" stroke="#ccc"/><path d="M4 0V11M7 0V11M0 4H11M0 7H11" stroke="#444"/><path d="M12 9H18L15 12Z" fill="#cfcfcf"/></svg>
<svg class="a" style="left:1801px;top:479px;" width="11" height="11" viewBox="0 0 11 11"><rect x="0.5" y="0.5" width="10" height="10" fill="none" stroke="#ccc"/><path d="M2 3H9M2 5.5H9M2 8H9" stroke="#ccc"/></svg>
<svg class="a" style="left:1827px;top:479px;" width="13" height="11" viewBox="0 0 13 11"><path d="M0 2H5L6 3.5H13V11H0Z" fill="#d0d0d0"/></svg>
<svg class="a" style="left:1854px;top:479px;" width="11" height="11" viewBox="0 0 11 11"><path d="M1 0H11V11H5V7H1Z" fill="#d4d4d4"/><path d="M1 7H5V11Z" fill="#5a5a5a"/></svg>
<svg class="a" style="left:1880px;top:478px;" width="11" height="12" viewBox="0 0 11 12"><path d="M0 2H11M4 0H7" stroke="#cfcfcf" stroke-width="1.4"/><path d="M1.5 3.5H9.5V12H1.5Z" fill="none" stroke="#cfcfcf" stroke-width="1.2"/><path d="M4 4V11M7 4V11" stroke="#cfcfcf"/></svg>
<svg class="a" style="left:1908px;top:486px;" width="8" height="8" viewBox="0 0 8 8"><rect x="6" y="0" width="1" height="1" fill="#222"/><rect x="4" y="2" width="1" height="1" fill="#222"/><rect x="6" y="2" width="1" height="1" fill="#222"/><rect x="2" y="4" width="1" height="1" fill="#222"/><rect x="4" y="4" width="1" height="1" fill="#222"/><rect x="6" y="4" width="1" height="1" fill="#222"/><rect x="0" y="6" width="1" height="1" fill="#222"/><rect x="2" y="6" width="1" height="1" fill="#222"/><rect x="4" y="6" width="1" height="1" fill="#222"/><rect x="6" y="6" width="1" height="1" fill="#222"/></svg>
<div class="a" style="left:1664px;top:491px;width:254px;height:3px;background:#2e2e2e;"></div>
<div class="a" style="left:1664px;top:496px;width:254px;height:17px;background:#383838;"></div>
<div class="a" style="left:1664px;top:513px;width:254px;height:1px;background:#3e3e3e;"></div>
<div class="a" style="left:1664px;top:496px;width:50px;height:17px;background:#3d3d3d;"></div>
<div class="a" style="left:1713px;top:496px;width:1px;height:17px;background:#303030;"></div>
<div class="t" style="left:1671.0px;top:498.69px;font-size:11px;line-height:11px;font-weight:700;color:#a0a0a0;transform:scaleX(0.9267);">Verlauf</div>
<div class="a" style="left:1714px;top:496px;width:76px;height:18px;background:#4a4a4a;"></div>
<svg class="a" style="left:1719px;top:500px;" width="6" height="10" viewBox="0 0 6 10"><path d="M0.5 4L3 1L5.5 4M0.5 6L3 9L5.5 6" stroke="#e0e0e0" fill="none" stroke-width="1.1"/></svg>
<div class="t" style="left:1727.0px;top:498.69px;font-size:11px;line-height:11px;font-weight:700;color:#e6e6e6;transform:scaleX(0.8640);">Transparenz</div>
<svg class="a" style="left:1901px;top:500px;" width="15" height="8" viewBox="0 0 15 8"><path d="M0 2H5L2.5 5Z" fill="#cfcfcf"/><path d="M6 0.5H15M6 2.5H15M6 4.5H15M6 6.5H15" stroke="#cfcfcf" stroke-width="1"/></svg>
<div class="a" style="left:1670px;top:521px;width:115px;height:19px;background:linear-gradient(#575757,#4b4b4b);border:1px solid #2c2c2c;"></div>
<div class="a" style="left:1765px;top:524px;width:1px;height:13px;background:#3a3a3a;"></div>
<div class="t" style="left:1677.0px;top:523.69px;font-size:11px;line-height:11px;font-weight:400;color:#e0e0e0;transform:scaleX(0.8885);">Normal</div>
<svg class="a" style="left:1772.0px;top:528.0px;" width="7" height="5" viewBox="0 0 7 5"><path d="M0 0H7L3.5 5Z" fill="#d8d8d8"/></svg>
<div class="t" style="left:1801.0px;top:523.69px;font-size:11px;line-height:11px;font-weight:400;color:#e0e0e0;transform:scaleX(0.8886);">Deckkraft:</div>
<div class="a" style="left:1852px;top:522px;width:45px;height:18px;background:#bebebe;border:1px solid #2c2c2c;"></div>
<div class="t" style="left:1854.0px;top:524.69px;font-size:11px;line-height:11px;font-weight:400;color:#151515;transform:scaleX(0.8173);">100%</div>
<div class="a" style="left:1897px;top:522px;width:16px;height:18px;background:linear-gradient(#575757,#4a4a4a);border:1px solid #2e2e2e;"></div>
<svg class="a" style="left:1901.5px;top:529.0px;" width="7" height="4" viewBox="0 0 7 4"><path d="M0 0H7L3.5 4Z" fill="#d8d8d8"/></svg>
<div class="a" style="left:1669px;top:546px;width:245px;height:1px;background:#3f3f3f;"></div>
<div class="a" style="left:1670px;top:556px;width:131px;height:55px;background:#4a4a4a;border:1px solid #2a2a2a;"></div>
<div class="a" style="left:1807px;top:555px;width:106px;height:18px;background:#4e4e4e;border:1px solid #3c3c3c;"></div>
<div class="t" style="left:1825.7px;top:557.69px;font-size:11px;line-height:11px;font-weight:400;color:#7e7e7e;transform:scaleX(0.8826);">Maske erstellen</div>
<div class="a" style="left:1807px;top:581px;width:12px;height:12px;background:#474747;border:1px solid #3a3a3a;"></div>
<div class="t" style="left:1823.0px;top:579.69px;font-size:11px;line-height:11px;font-weight:400;color:#7e7e7e;transform:scaleX(0.8670);">Maskieren</div>
<div class="a" style="left:1807px;top:601px;width:12px;height:12px;background:#474747;border:1px solid #3a3a3a;"></div>
<div class="t" style="left:1823.0px;top:599.69px;font-size:11px;line-height:11px;font-weight:400;color:#7e7e7e;transform:scaleX(0.8867);">Umkehren</div>
<div class="a" style="left:1664px;top:619px;width:254px;height:4px;background:#2e2e2e;"></div>
<div class="a" style="left:1664px;top:623px;width:254px;height:15px;background:#383838;"></div>
<div class="a" style="left:1664px;top:638px;width:254px;height:1px;background:#3e3e3e;"></div>
<div class="a" style="left:1664px;top:623px;width:63px;height:16px;background:#4a4a4a;"></div>
<div class="t" style="left:1671.0px;top:625.69px;font-size:11px;line-height:11px;font-weight:700;color:#e6e6e6;transform:scaleX(0.9031);">Grafikstile</div>
<svg class="a" style="left:1901px;top:627px;" width="15" height="8" viewBox="0 0 15 8"><path d="M0 2H5L2.5 5Z" fill="#cfcfcf"/><path d="M6 0.5H15M6 2.5H15M6 4.5H15M6 6.5H15" stroke="#cfcfcf" stroke-width="1"/></svg>
<div class="a" style="left:1669px;top:645px;width:245px;height:165px;background:#494949;border:1px solid #2c2c2c;"></div>
<div class="a" style="left:1902px;top:646px;width:11px;height:163px;background:#3f3f3f;"></div>
<svg class="a" style="left:1903px;top:651px;" width="9" height="5" viewBox="0 0 9 5"><path d="M0 5L4.5 0L9 5Z" fill="#6a6a6a"/></svg>
<svg class="a" style="left:1903px;top:799px;" width="9" height="5" viewBox="0 0 9 5"><path d="M0 0H9L4.5 5Z" fill="#6a6a6a"/></svg>
<div class="a" style="left:1670px;top:646px;width:32px;height:32px;background:#e6e6e6;"></div>
<div class="a" style="left:1674px;top:650px;width:24px;height:24px;background:#fff;border:1px solid #777;"></div>
<svg class="a" style="left:1673px;top:665px;" width="10" height="10" viewBox="0 0 10 10"><rect x="1" y="1" width="6" height="6" fill="#fff" stroke="#000"/><rect x="3" y="3" width="6" height="6" fill="none" stroke="#000"/></svg>
<div class="a" style="left:1703px;top:646px;width:32px;height:32px;background:#e6e6e6;"></div>
<div class="a" style="left:1707px;top:650px;width:24px;height:24px;background:#fff;border:1px solid #777;"></div>
<div class="a" style="left:1736px;top:646px;width:32px;height:32px;background:#e6e6e6;"></div>
<div class="a" style="left:1740px;top:650px;width:24px;height:24px;background:#fff;border:1px solid #777;"></div>
<div class="a" style="left:1769px;top:646px;width:32px;height:32px;background:#e6e6e6;"></div>
<div class="a" style="left:1773px;top:656px;width:12px;height:12px;background:#fff;border:1px solid #aaa;"></div>
<div class="a" style="left:1785px;top:656px;width:12px;height:12px;background:#fff;border:1px solid #aaa;"></div>
<svg class="a" style="left:1773px;top:668px;" width="8" height="8" viewBox="0 0 8 8"><rect x="0.5" y="0.5" width="7" height="7" fill="#fff" stroke="#c01020"/><path d="M1 7L7 1" stroke="#c01020" stroke-width="1.5"/></svg>
<div class="a" style="left:1802px;top:646px;width:32px;height:32px;background:#e6e6e6;"></div>
<div class="a" style="left:1806px;top:650px;width:24px;height:24px;background:radial-gradient(circle at 35% 30%,#f0f0f0,#a0a0a0);"></div>
<div class="a" style="left:1835px;top:646px;width:32px;height:32px;background:#e6e6e6;"></div>
<div class="a" style="left:1839px;top:650px;width:24px;height:24px;background:radial-gradient(circle at 50% 0%,#d8ecfc,#5a9ee8 60%,#2a66c8);"></div>
<div class="a" style="left:1868px;top:646px;width:32px;height:32px;background:#e6e6e6;"></div>
<svg class="a" style="left:1872px;top:650px;" width="24" height="24" viewBox="0 0 24 24"><rect width="24" height="24" fill="#e8c800"/><path d="M0 6C6 2 10 14 24 6V14C14 20 8 10 0 16Z" fill="#5ab020"/><path d="M4 24C8 16 16 20 20 10" stroke="#a8d030" stroke-width="3" fill="none"/></svg>
<div class="a" style="left:1670px;top:679px;width:32px;height:32px;background:#e6e6e6;"></div>
<svg class="a" style="left:1674px;top:683px;" width="24" height="24" viewBox="0 0 24 24"><rect width="24" height="24" fill="#2f5a60"/><path d="M3 20C8 10 6 4 14 2M10 24C12 16 18 14 22 8M2 8C6 10 10 8 12 14" stroke="#5aa8d8" stroke-width="3" fill="none"/></svg>
<svg class="a" style="left:1673px;top:814px;" width="18" height="12" viewBox="0 0 18 12"><path d="M1 1V10M4 1V10M7 1L10 10" stroke="#d0d0d0" stroke-width="1.8"/><path d="M12 9H18L15 12Z" fill="#cfcfcf"/></svg>
<svg class="a" style="left:1826px;top:814px;" width="16" height="12" viewBox="0 0 16 12"><path d="M5 3H2C0 3 0 9 2 9H5M11 3H14C16 3 16 9 14 9H11M8 0V3M8 9V12" stroke="#6a6a6a" stroke-width="1.5" fill="none"/></svg>
<svg class="a" style="left:1854px;top:814px;" width="11" height="11" viewBox="0 0 11 11"><path d="M1 0H11V11H5V7H1Z" fill="#d4d4d4"/><path d="M1 7H5V11Z" fill="#5a5a5a"/></svg>
<svg class="a" style="left:1880px;top:813px;" width="11" height="12" viewBox="0 0 11 12"><path d="M0 2H11M4 0H7" stroke="#666" stroke-width="1.4"/><path d="M1.5 3.5H9.5V12H1.5Z" fill="none" stroke="#666" stroke-width="1.2"/><path d="M4 4V11M7 4V11" stroke="#666"/></svg>
<svg class="a" style="left:1908px;top:821px;" width="8" height="8" viewBox="0 0 8 8"><rect x="6" y="0" width="1" height="1" fill="#222"/><rect x="4" y="2" width="1" height="1" fill="#222"/><rect x="6" y="2" width="1" height="1" fill="#222"/><rect x="2" y="4" width="1" height="1" fill="#222"/><rect x="4" y="4" width="1" height="1" fill="#222"/><rect x="6" y="4" width="1" height="1" fill="#222"/><rect x="0" y="6" width="1" height="1" fill="#222"/><rect x="2" y="6" width="1" height="1" fill="#222"/><rect x="4" y="6" width="1" height="1" fill="#222"/><rect x="6" y="6" width="1" height="1" fill="#222"/></svg>
<div class="a" style="left:1664px;top:829px;width:254px;height:4px;background:#2e2e2e;"></div>
<div class="a" style="left:1664px;top:833px;width:254px;height:15px;background:#383838;"></div>
<div class="a" style="left:1664px;top:848px;width:254px;height:1px;background:#3e3e3e;"></div>
<div class="a" style="left:1664px;top:833px;width:84px;height:16px;background:#4a4a4a;"></div>
<div class="t" style="left:1671.0px;top:835.69px;font-size:11px;line-height:11px;font-weight:700;color:#e6e6e6;transform:scaleX(0.8741);">Zeichenflächen</div>
<svg class="a" style="left:1901px;top:837px;" width="15" height="8" viewBox="0 0 15 8"><path d="M0 2H5L2.5 5Z" fill="#cfcfcf"/><path d="M6 0.5H15M6 2.5H15M6 4.5H15M6 6.5H15" stroke="#cfcfcf" stroke-width="1"/></svg>
<div class="a" style="left:1669px;top:854px;width:245px;height:166px;background:#4a4a4a;border:1px solid #2c2c2c;"></div>
<div class="a" style="left:1670px;top:855px;width:243px;height:19px;background:#5a6170;"></div>
<div class="a" style="left:1700px;top:855px;width:1px;height:19px;background:#3e4350;"></div>
<div class="a" style="left:1873px;top:855px;width:1px;height:19px;background:#3e4350;"></div>
<div class="t" style="left:1676.0px;top:859.69px;font-size:11px;line-height:11px;font-weight:400;color:#e6e6e6;transform:scaleX(0.9796);">1</div>
<div class="t" style="left:1705.7px;top:859.69px;font-size:11px;line-height:11px;font-weight:400;color:#e6e6e6;transform:scaleX(0.8974);">Zeichenfläche 2</div>
<svg class="a" style="left:1880px;top:858px;" width="14" height="14" viewBox="0 0 14 14"><rect x="3.5" y="2.5" width="7" height="9" fill="none" stroke="#d8d8d8"/><path d="M1 2.5H2M12 2.5H13M1 11.5H2M12 11.5H13M3.5 0V1M10.5 0V1M3.5 13V14M10.5 13V14" stroke="#bbb"/></svg>
<div class="t" style="left:1669.0px;top:1023.53px;font-size:10px;line-height:10px;font-weight:400;color:#e2e2e2;transform:scaleX(0.9772);">1 Zeichenfläche</div>
<svg class="a" style="left:1801px;top:1024px;" width="13" height="12" viewBox="0 0 13 12"><path d="M6.5 0L13 6H9V12H4V6H0Z" fill="#6a6a6a"/></svg>
<svg class="a" style="left:1827px;top:1024px;" width="13" height="12" viewBox="0 0 13 12"><path d="M6.5 12L13 6H9V0H4V6H0Z" fill="#6a6a6a"/></svg>
<svg class="a" style="left:1854px;top:1024px;" width="11" height="11" viewBox="0 0 11 11"><path d="M1 0H11V11H5V7H1Z" fill="#d4d4d4"/><path d="M1 7H5V11Z" fill="#5a5a5a"/></svg>
<svg class="a" style="left:1880px;top:1023px;" width="11" height="12" viewBox="0 0 11 12"><path d="M0 2H11M4 0H7" stroke="#666" stroke-width="1.4"/><path d="M1.5 3.5H9.5V12H1.5Z" fill="none" stroke="#666" stroke-width="1.2"/><path d="M4 4V11M7 4V11" stroke="#666"/></svg>
<svg class="a" style="left:0;top:0" width="42" height="1041" viewBox="0 0 42 1041"><rect x="6.5" y="94" width="27" height="21" rx="2" fill="#363636"/><g transform="translate(10,94.5)"><path d="M6 1.5V16L9.5 12.5L12 17.5L14 16.5L11.5 11.5H16Z" fill="#2a2a2a" stroke="#cdcdcd" stroke-width="1.2"/></g><g transform="translate(10,119.5)"><path d="M6 2V16L9.5 12.5L12 17.5L14 16.5L11.5 11.5H16Z" fill="#cdcdcd"/></g><path d="M28 138.5H32V134.5Z" fill="#cdcdcd"/><g transform="translate(10,143)"><path d="M5 2L6.5 5.5L10 4L8 7L11 9L7.5 9.5L8 13L5.5 10.5L3 13L3.5 9.5L0 9L3 7L1 4L4.5 5.5Z" fill="#cdcdcd"/><path d="M7 9L16 18" stroke="#cdcdcd" stroke-width="2"/></g><g transform="translate(10,167.5)"><ellipse cx="9" cy="7" rx="7" ry="4.5" fill="none" stroke="#cdcdcd" stroke-width="1.3"/><path d="M3 10C1 13 4 16 6 14" fill="none" stroke="#cdcdcd" stroke-width="1.2"/><path d="M9 6V17L11.5 14.5L13.5 18L15 17L13 13.5H17Z" fill="#cdcdcd"/></g><rect x="4" y="189.5" width="32" height="1" fill="#3a3a3a"/><rect x="4" y="190.5" width="32" height="1" fill="#555"/><g transform="translate(10,193)"><path d="M2 18L5 9L12 3L17 8L11 15Z" fill="#cdcdcd"/><path d="M2 18L8 12" stroke="#3a3a3a" stroke-width="1"/><circle cx="8" cy="12" r="1.3" fill="#3a3a3a"/></g><path d="M28 212H32V208Z" fill="#cdcdcd"/><g transform="translate(10,216)"><text x="10" y="17" font-family="Liberation Serif" font-size="19" fill="#cdcdcd" text-anchor="middle">T</text></g><path d="M28 235H32V231Z" fill="#cdcdcd"/><g transform="translate(10,240.5)"><path d="M3 17L17 3" stroke="#cdcdcd" stroke-width="1.4"/></g><path d="M28 259.5H32V255.5Z" fill="#cdcdcd"/><g transform="translate(10,265)"><rect x="2.5" y="4.5" width="15" height="11" fill="#777" stroke="#cdcdcd" stroke-width="1.2"/></g><path d="M28 284H32V280Z" fill="#cdcdcd"/><g transform="translate(10,289.5)"><path d="M17 2L8 11L10 13L18 3Z" fill="#cdcdcd"/><path d="M7 12C4 12 4 16 1 17C5 18 9 17 9 14Z" fill="#cdcdcd"/></g><path d="M28 308.5H32V304.5Z" fill="#cdcdcd"/><g transform="translate(10,313.5)"><path d="M3 13L13 3L17 7L7 17H3Z" fill="#cdcdcd"/><path d="M3 13L7 17" stroke="#3a3a3a"/></g><path d="M28 332.5H32V328.5Z" fill="#cdcdcd"/><g transform="translate(10,337)"><path d="M1 9H11V17H1Z" fill="#cdcdcd"/><path d="M18 2L10 10L12 12L19 4Z" fill="#cdcdcd"/><path d="M9 11C7 11 7 14 5 15" stroke="#3a3a3a" stroke-width="1.5" fill="none"/></g><path d="M28 356H32V352Z" fill="#cdcdcd"/><g transform="translate(10,360.5)"><path d="M1 13L9 5L17 8L9 16H4Z" fill="#cdcdcd"/><path d="M9 5L13 2L19 5L17 8Z" fill="#e8e8e8"/></g><path d="M28 379.5H32V375.5Z" fill="#cdcdcd"/><rect x="4" y="382" width="32" height="1" fill="#3a3a3a"/><rect x="4" y="383" width="32" height="1" fill="#555"/><g transform="translate(10,386)"><circle cx="10" cy="10" r="7" fill="none" stroke="#cdcdcd" stroke-width="1.2" stroke-dasharray="2 1.5"/><path d="M2 3L6 2L5 6Z" fill="#cdcdcd"/></g><path d="M28 405H32V401Z" fill="#cdcdcd"/><g transform="translate(10,410.5)"><rect x="1.5" y="8.5" width="9" height="9" fill="none" stroke="#cdcdcd" stroke-width="1.2"/><rect x="7.5" y="2.5" width="10" height="10" fill="#5a5a5a" stroke="#cdcdcd" stroke-width="1.2"/><path d="M9 10L15 4M11 4H15V8" stroke="#cdcdcd" stroke-width="1.2" fill="none"/></g><path d="M28 429.5H32V425.5Z" fill="#cdcdcd"/><g transform="translate(10,435)"><path d="M2 16C4 10 8 12 10 8C12 4 8 2 11 1M10 8C14 10 16 6 18 9C20 12 16 15 12 14" stroke="#cdcdcd" stroke-width="2" fill="none"/><circle cx="4" cy="15" r="2" fill="#cdcdcd"/></g><path d="M28 454H32V450Z" fill="#cdcdcd"/><g transform="translate(10,458.5)"><rect x="2.5" y="2.5" width="15" height="15" fill="none" stroke="#cdcdcd" stroke-dasharray="2 2"/><path d="M3 3V15L6.5 11.5L9 16L11 15L8.5 10.5H13Z" fill="#cdcdcd"/></g><g transform="translate(10,483)"><circle cx="7" cy="8" r="6" fill="#777" stroke="#cdcdcd"/><circle cx="12" cy="11" r="6" fill="#777" stroke="#cdcdcd"/><path d="M10 8V19L12.5 16.5L14.5 20L16 19L14 15.5H18Z" fill="#cdcdcd"/></g><path d="M28 502H32V498Z" fill="#cdcdcd"/><g transform="translate(10,507.5)"><path d="M2 2V18H18M5 2V15H18M8 6V12H18M11 9V10" stroke="#cdcdcd" stroke-width="1.5" fill="none"/></g><path d="M28 526.5H32V522.5Z" fill="#cdcdcd"/><rect x="4" y="529.5" width="32" height="1" fill="#3a3a3a"/><rect x="4" y="530.5" width="32" height="1" fill="#555"/><g transform="translate(10,533.5)"><rect x="2.5" y="2.5" width="15" height="15" fill="#5a5a5a" stroke="#cdcdcd" stroke-width="1.2"/><path d="M3 8C8 6 12 10 17 8M3 13C8 11 12 15 17 13M8 3C6 8 10 12 8 17M13 3C11 8 15 12 13 17" stroke="#cdcdcd" fill="none"/></g><defs><linearGradient id="tg" x1="0" x2="1"><stop offset="0" stop-color="#444"/><stop offset="1" stop-color="#d8d8d8"/></linearGradient></defs><g transform="translate(10,557)"><rect x="2.5" y="4.5" width="15" height="11" fill="url(#tg)" stroke="#cdcdcd"/></g><g transform="translate(10,581)"><path d="M2 18L3 14L12 5L15 8L6 17Z" fill="none" stroke="#cdcdcd" stroke-width="1.3"/><path d="M11 4L14 1C15.5 0 19 3.5 18 5L15 8Z" fill="#cdcdcd"/></g><path d="M28 600H32V596Z" fill="#cdcdcd"/><g transform="translate(10,604.5)"><rect x="1.5" y="3.5" width="8" height="8" fill="#777" stroke="#cdcdcd"/><circle cx="10" cy="10" r="5" fill="#777" stroke="#cdcdcd"/><circle cx="13" cy="13" r="5" fill="#666" stroke="#cdcdcd"/></g><rect x="4" y="626.5" width="32" height="1" fill="#3a3a3a"/><rect x="4" y="627.5" width="32" height="1" fill="#555"/><g transform="translate(10,630)"><rect x="6.5" y="7.5" width="10" height="11" fill="#5a5a5a" stroke="#cdcdcd"/><circle cx="11.5" cy="13" r="2.5" fill="none" stroke="#cdcdcd"/><rect x="9" y="4" width="5" height="3" fill="#cdcdcd"/><path d="M2 2H3M4 1H5M2 4H3M4 3H5M6 2H7" stroke="#cdcdcd"/></g><path d="M28 649H32V645Z" fill="#cdcdcd"/><g transform="translate(10,655)"><path d="M2 2V18H18" stroke="#cdcdcd" stroke-width="1.4" fill="none"/><rect x="5" y="9" width="2.5" height="8" fill="#cdcdcd"/><rect x="9" y="5" width="2.5" height="12" fill="#cdcdcd"/><rect x="13" y="11" width="2.5" height="6" fill="#cdcdcd"/></g><path d="M28 674H32V670Z" fill="#cdcdcd"/><rect x="4" y="678" width="32" height="1" fill="#3a3a3a"/><rect x="4" y="679" width="32" height="1" fill="#555"/><g transform="translate(10,681)"><rect x="4.5" y="5.5" width="11" height="9" fill="#6a6a6a" stroke="#cdcdcd"/><path d="M0 5.5H3M17 5.5H20M0 14.5H3M17 14.5H20M4.5 0V3M15.5 0V3M4.5 17V20M15.5 17V20" stroke="#cdcdcd"/></g><g transform="translate(10,706.5)"><path d="M2 18L10 8L18 2L13 12Z" fill="#cdcdcd"/></g><path d="M28 725.5H32V721.5Z" fill="#cdcdcd"/><g transform="translate(10,730)"><path d="M4 9V4C4 3 6 3 6 4V8V2C6 1 8 1 8 2V8V1.5C8 0.5 10 0.5 10 1.5V8V3C10 2 12 2 12 3V10L14 7C15 6 17 7 16 8L12 15C11 17 10 18 8 18H7C5 18 3 16 3 14V10C3 9 4 9 4 9Z" fill="#cdcdcd"/></g><path d="M28 749H32V745Z" fill="#cdcdcd"/><g transform="translate(10,753)"><circle cx="8" cy="8" r="6" fill="#777" stroke="#cdcdcd" stroke-width="2"/><path d="M12 12L17 17" stroke="#cdcdcd" stroke-width="3"/></g><rect x="4" y="775.5" width="32" height="1" fill="#3a3a3a"/><rect x="4" y="776.5" width="32" height="1" fill="#555"/><rect x="5.5" y="780.5" width="8" height="8" fill="#e8e8e8" stroke="#222"/><rect x="8.5" y="783.5" width="8" height="8" fill="none" stroke="#ddd" stroke-width="1"/><rect x="9.5" y="784.5" width="6" height="6" fill="none" stroke="#111"/><path d="M26 779L28 777V778.5H31C33 778.5 33.5 780 33.5 782V786H35L33 788.5L31 786H32.5V782C32.5 780.5 32 779.5 31 779.5H28V781Z" fill="#cdcdcd"/><rect x="16" y="808" width="19" height="19" fill="#fff"/><rect x="17" y="809" width="17" height="17" fill="#000"/><rect x="20" y="812" width="11" height="11" fill="#fff"/><rect x="21" y="813" width="9" height="9" fill="#4a4a4a"/><rect x="5" y="797" width="20" height="20" fill="#222"/><rect x="6" y="798" width="18" height="18" fill="#fff"/><rect x="6.5" y="833.5" width="9" height="9" fill="#fff" stroke="#222"/><rect x="15.5" y="833.5" width="9" height="9" fill="url(#tg2)" stroke="#222"/><rect x="24.5" y="833.5" width="9" height="9" fill="#fff" stroke="#222"/><path d="M25 842L33 834" stroke="#e01010" stroke-width="1.6"/><defs><linearGradient id="tg2" x1="0" x2="1"><stop offset="0" stop-color="#fff"/><stop offset="1" stop-color="#222"/></linearGradient></defs><path d="M20 852C16 851 14 855 16 858" stroke="#cdcdcd" stroke-width="1.5" fill="none"/><rect x="18" y="855" width="7" height="7" fill="#cdcdcd"/><rect x="11.5" y="880.5" width="11" height="8" fill="#6a6a6a" stroke="#cdcdcd"/><rect x="16.5" y="875.5" width="12" height="8" fill="#6a6a6a" stroke="#cdcdcd"/></svg>
</body></html>
